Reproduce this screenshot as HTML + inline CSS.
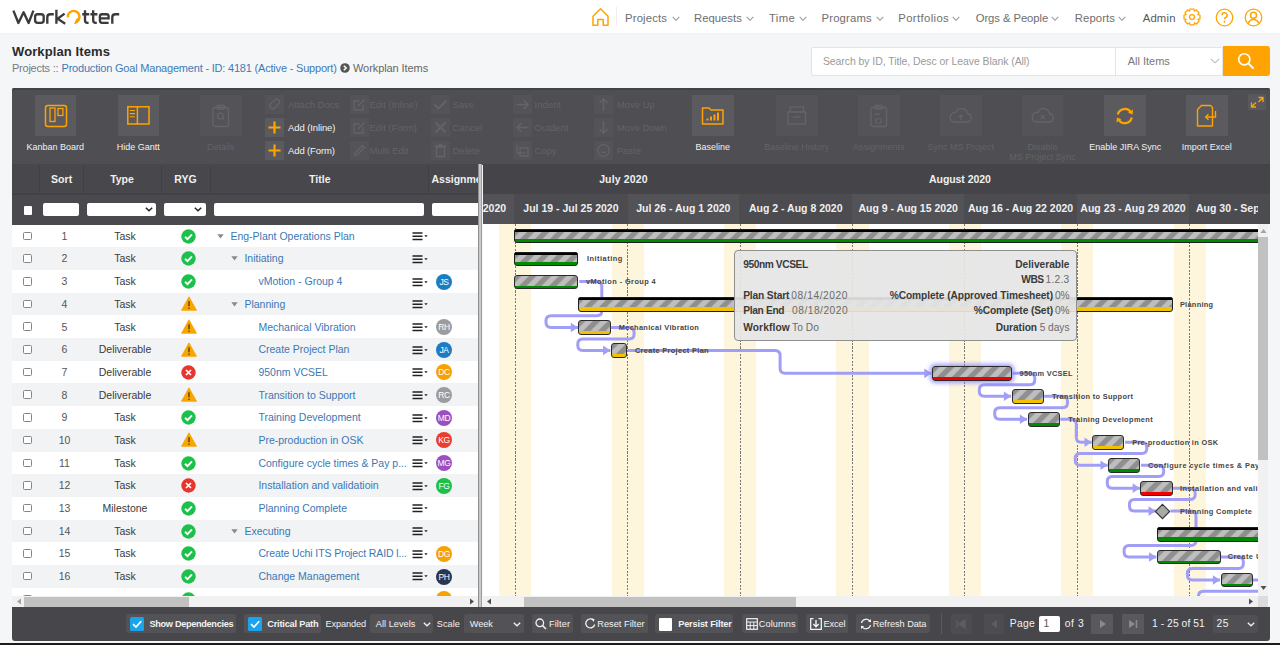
<!DOCTYPE html>
<html><head><meta charset="utf-8"><title>Workplan Items</title>
<style>
html,body{margin:0;padding:0;}
body{width:1280px;height:645px;overflow:hidden;position:relative;background:#f5f6f8;font-family:'Liberation Sans', sans-serif;}
.t{position:absolute;white-space:pre;}
svg{display:block;}
</style></head><body>
<div style="position:absolute;left:0.00px;top:0.00px;width:1280.00px;height:33.00px;background:#ffffff;"></div>
<div style="position:absolute;left:0.00px;top:33.00px;width:1280.00px;height:2.00px;background:linear-gradient(#f0f1f3,#f5f6f8);"></div>
<svg style="position:absolute;left:0.00px;top:0.00px;" width="130.00" height="33.00" viewBox="0 0 130.00 33.00"><g fill="none" stroke="#3b3b3d" stroke-width="2.35" stroke-linejoin="miter"><path d="M13.4 10.6 L18.4 23.0 L23.6 12.2 L28.6 23.0 L33.4 10.6" stroke-linejoin="round"/><rect x="35.1" y="14.2" width="8.6" height="8.6" rx="2.6"/><path d="M47.3 23.8 V17.2 Q47.3 14.2 50.3 14.2 H53.8"/><path d="M56.4 9.8 V23.8 M64.6 13.6 L57.6 18.8 L65.2 23.8"/><path d="M85 10.2 V20.6 Q85 22.8 87.4 22.8 H88.6 M82.2 14.2 H89.2"/><path d="M93.2 10.2 V20.6 Q93.2 22.8 95.6 22.8 H96.8 M90.4 14.2 H97.4"/><path d="M108.6 22.8 H102 Q99.9 22.8 99.9 20.6 V16.4 Q99.9 14.2 102.1 14.2 H106.4 Q108.6 14.2 108.6 16.4 V18.4 H100.6"/><path d="M112.3 23.8 V17.2 Q112.3 14.2 115.3 14.2 H119.2"/></g><path d="M67.9 17.4 A5.8 5.8 0 1 1 77.6 21.0" fill="none" stroke="#ffa300" stroke-width="2.4"/><path d="M79.3 18.6 Q79.2 22.8 74.6 23.6 Q75.8 21.2 76.6 19.0 Z" fill="#ffa300" stroke="#ffa300" stroke-width="1" stroke-linejoin="round"/></svg>
<div class="t" style="left:625.00px;top:13.43px;font:normal 11.3px/11.3px 'Liberation Sans', sans-serif;color:#6e6e6e;letter-spacing:0.165px;">Projects</div>
<svg style="position:absolute;left:672.00px;top:15.50px;" width="8.00" height="6.00" viewBox="0 0 8.00 6.00"><path d="M0.7 0.8 L4 4.3 L7.3 0.8" fill="none" stroke="#9a9a9a" stroke-width="1.1"/></svg>
<div class="t" style="left:694.00px;top:13.43px;font:normal 11.3px/11.3px 'Liberation Sans', sans-serif;color:#6e6e6e;letter-spacing:0.012px;">Requests</div>
<svg style="position:absolute;left:745.60px;top:15.50px;" width="8.00" height="6.00" viewBox="0 0 8.00 6.00"><path d="M0.7 0.8 L4 4.3 L7.3 0.8" fill="none" stroke="#9a9a9a" stroke-width="1.1"/></svg>
<div class="t" style="left:769.00px;top:13.43px;font:normal 11.3px/11.3px 'Liberation Sans', sans-serif;color:#6e6e6e;letter-spacing:0.361px;">Time</div>
<svg style="position:absolute;left:798.50px;top:15.50px;" width="8.00" height="6.00" viewBox="0 0 8.00 6.00"><path d="M0.7 0.8 L4 4.3 L7.3 0.8" fill="none" stroke="#9a9a9a" stroke-width="1.1"/></svg>
<div class="t" style="left:821.50px;top:13.43px;font:normal 11.3px/11.3px 'Liberation Sans', sans-serif;color:#6e6e6e;letter-spacing:0.170px;">Programs</div>
<svg style="position:absolute;left:875.50px;top:15.50px;" width="8.00" height="6.00" viewBox="0 0 8.00 6.00"><path d="M0.7 0.8 L4 4.3 L7.3 0.8" fill="none" stroke="#9a9a9a" stroke-width="1.1"/></svg>
<div class="t" style="left:898.30px;top:13.43px;font:normal 11.3px/11.3px 'Liberation Sans', sans-serif;color:#6e6e6e;letter-spacing:0.374px;">Portfolios</div>
<svg style="position:absolute;left:951.80px;top:15.50px;" width="8.00" height="6.00" viewBox="0 0 8.00 6.00"><path d="M0.7 0.8 L4 4.3 L7.3 0.8" fill="none" stroke="#9a9a9a" stroke-width="1.1"/></svg>
<div class="t" style="left:975.70px;top:13.43px;font:normal 11.3px/11.3px 'Liberation Sans', sans-serif;color:#6e6e6e;letter-spacing:-0.080px;">Orgs &amp; People</div>
<svg style="position:absolute;left:1051.30px;top:15.50px;" width="8.00" height="6.00" viewBox="0 0 8.00 6.00"><path d="M0.7 0.8 L4 4.3 L7.3 0.8" fill="none" stroke="#9a9a9a" stroke-width="1.1"/></svg>
<div class="t" style="left:1074.70px;top:13.43px;font:normal 11.3px/11.3px 'Liberation Sans', sans-serif;color:#6e6e6e;letter-spacing:0.124px;">Reports</div>
<svg style="position:absolute;left:1118.30px;top:15.50px;" width="8.00" height="6.00" viewBox="0 0 8.00 6.00"><path d="M0.7 0.8 L4 4.3 L7.3 0.8" fill="none" stroke="#9a9a9a" stroke-width="1.1"/></svg>
<div class="t" style="left:1142.70px;top:12.93px;font:normal 11.3px/11.3px 'Liberation Sans', sans-serif;color:#585858;letter-spacing:0.180px;">Admin</div>
<div style="position:absolute;left:616.00px;top:7.00px;width:1.00px;height:19.00px;background:#eeeeee;"></div>
<svg style="position:absolute;left:591.00px;top:7.00px;" width="19.00" height="20.00" viewBox="0 0 19.00 20.00"><path d="M2 9.2 L9.5 1.8 L17 9.2 V18.2 H12.2 V12.5 H6.8 V18.2 H2 Z" fill="none" stroke="#ffa300" stroke-width="1.5" stroke-linejoin="round"/></svg>
<svg style="position:absolute;left:1182.50px;top:8.00px;" width="18.00" height="18.00" viewBox="0 0 18.00 18.00"><path d="M16.96 7.05 L16.96 10.95 L14.84 11.61 L14.98 11.29 L16.01 13.25 L13.25 16.01 L11.29 14.98 L11.61 14.84 L10.95 16.96 L7.05 16.96 L6.39 14.84 L6.71 14.98 L4.75 16.01 L1.99 13.25 L3.02 11.29 L3.16 11.61 L1.04 10.95 L1.04 7.05 L3.16 6.39 L3.02 6.71 L1.99 4.75 L4.75 1.99 L6.71 3.02 L6.39 3.16 L7.05 1.04 L10.95 1.04 L11.61 3.16 L11.29 3.02 L13.25 1.99 L16.01 4.75 L14.98 6.71 L14.84 6.39Z" fill="none" stroke="#ffa300" stroke-width="1.25" stroke-linejoin="round"/><circle cx="9" cy="9" r="2.4" fill="none" stroke="#ffa300" stroke-width="1.25"/></svg>
<svg style="position:absolute;left:1215.00px;top:8.00px;" width="19.00" height="19.00" viewBox="0 0 19.00 19.00"><circle cx="9.5" cy="9.5" r="8.3" fill="none" stroke="#ffa300" stroke-width="1.25"/><path d="M6.9 7.3 A2.6 2.6 0 1 1 10.4 9.7 C9.7 10 9.5 10.5 9.5 11.3" fill="none" stroke="#ffa300" stroke-width="1.5"/><circle cx="9.5" cy="13.8" r="0.95" fill="#ffa300"/></svg>
<svg style="position:absolute;left:1244.00px;top:8.00px;" width="19.00" height="19.00" viewBox="0 0 19.00 19.00"><circle cx="9.5" cy="9.5" r="8.3" fill="none" stroke="#ffa300" stroke-width="1.25"/><circle cx="9.5" cy="7.3" r="3" fill="none" stroke="#ffa300" stroke-width="1.5"/><path d="M4.2 15.6 C5.2 12.6 7.2 11.6 9.5 11.6 C11.8 11.6 13.8 12.6 14.8 15.6" fill="none" stroke="#ffa300" stroke-width="1.5"/></svg>
<div class="t" style="left:12.00px;top:44.60px;font:bold 13px/13px 'Liberation Sans', sans-serif;color:#2a2a2a;letter-spacing:0.110px;">Workplan Items</div>
<div class="t" style="left:12.00px;top:62.69px;font:normal 11px/11px 'Liberation Sans', sans-serif;color:#7a7a7a;letter-spacing:-0.239px;">Projects :: </div>
<div class="t" style="left:61.50px;top:62.69px;font:normal 11px/11px 'Liberation Sans', sans-serif;color:#3e7bb6;letter-spacing:-0.197px;">Production Goal Management - ID: 4181 (Active - Support)</div>
<svg style="position:absolute;left:339.50px;top:63.00px;" width="10.00" height="10.00" viewBox="0 0 10.00 10.00"><circle cx="5" cy="5" r="4.8" fill="#555"/><path d="M3.8 2.7 L6.2 5 L3.8 7.3" fill="none" stroke="#fff" stroke-width="1.5"/></svg>
<div class="t" style="left:353.00px;top:62.69px;font:normal 11px/11px 'Liberation Sans', sans-serif;color:#666;letter-spacing:-0.080px;">Workplan Items</div>
<div style="position:absolute;left:810.50px;top:46.50px;width:412.00px;height:29.50px;background:#fff;border:1px solid #e3e4e7;box-sizing:border-box;border-radius:2px 0 0 2px;"></div>
<div style="position:absolute;left:1115.00px;top:47.00px;width:1.00px;height:28.50px;background:#e3e4e7;"></div>
<div class="t" style="left:822.90px;top:56.11px;font:normal 10.5px/10.5px 'Liberation Sans', sans-serif;color:#9a9a9a;letter-spacing:-0.075px;">Search by ID, Title, Desc or Leave Blank (All)</div>
<div class="t" style="left:1127.70px;top:55.69px;font:normal 11px/11px 'Liberation Sans', sans-serif;color:#777;letter-spacing:-0.010px;">All Items</div>
<svg style="position:absolute;left:1210.00px;top:58.00px;" width="10.00" height="6.00" viewBox="0 0 10.00 6.00"><path d="M0.8 0.8 L5 4.8 L9.2 0.8" fill="none" stroke="#bbb" stroke-width="1.1"/></svg>
<div style="position:absolute;left:1222.50px;top:46.20px;width:47.00px;height:29.80px;background:#ffa300;border-radius:0 3px 3px 0;"></div>
<svg style="position:absolute;left:1237.00px;top:52.00px;" width="18.00" height="18.00" viewBox="0 0 18.00 18.00"><circle cx="7.3" cy="7.3" r="5.6" fill="none" stroke="#fff" stroke-width="1.6"/><path d="M11.4 11.4 L16 16" stroke="#fff" stroke-width="1.8" stroke-linecap="round"/></svg>
<div style="position:absolute;left:11.50px;top:88.00px;width:1258.00px;height:77.00px;background:#4e4e53;border-radius:2px 2px 0 0;"></div>
<div style="position:absolute;left:11.50px;top:88.00px;width:1258.00px;height:1.50px;background:#434347;border-radius:2px 2px 0 0;"></div>
<div style="position:absolute;left:34.50px;top:95.00px;width:41.50px;height:41.00px;background:#5a5a5f;"></div>
<svg style="position:absolute;left:34.50px;top:95.00px;" width="41.50" height="41.00" viewBox="0 0 41.50 41.00"><rect x="10.5" y="10.5" width="21" height="21" rx="2.5" fill="none" stroke="#ffa300" stroke-width="1.5"/><rect x="15" y="13" width="5" height="13.5" fill="none" stroke="#ffa300" stroke-width="1.3"/><rect x="22.9" y="13.5" width="5" height="7" fill="none" stroke="#ffa300" stroke-width="1.3"/></svg>
<div class="t" style="left:26.48px;top:142.88px;font:normal 9px/9px 'Liberation Sans', sans-serif;color:#f2f2f2;">Kanban Board</div>
<div style="position:absolute;left:117.50px;top:95.00px;width:41.50px;height:41.00px;background:#5a5a5f;"></div>
<svg style="position:absolute;left:117.50px;top:95.00px;" width="41.50" height="41.00" viewBox="0 0 41.50 41.00"><rect x="9.8" y="11.8" width="21.2" height="17.2" fill="none" stroke="#ffa300" stroke-width="1.5"/><path d="M19.4 11.8 V29" stroke="#ffa300" stroke-width="1.5"/><path d="M11.8 15.5 H17 M11.8 18.6 H17 M11.8 21.7 H17" stroke="#ffa300" stroke-width="1.1"/></svg>
<div class="t" style="left:116.73px;top:142.88px;font:normal 9px/9px 'Liberation Sans', sans-serif;color:#f2f2f2;">Hide Gantt</div>
<div style="position:absolute;left:200.00px;top:95.00px;width:41.50px;height:41.00px;background:#535358;"></div>
<svg style="position:absolute;left:200.00px;top:95.00px;" width="41.50" height="41.00" viewBox="0 0 41.50 41.00"><rect x="13" y="12.5" width="15.5" height="19" rx="2" fill="none" stroke="#636368" stroke-width="1.4"/><rect x="17" y="10.5" width="7.5" height="3.5" rx="1" fill="none" stroke="#636368" stroke-width="1.3"/><circle cx="20.3" cy="21" r="2.8" fill="none" stroke="#636368" stroke-width="1.3"/><path d="M22.3 23 L24.5 25.2" stroke="#636368" stroke-width="1.3"/></svg>
<div class="t" style="left:206.99px;top:142.88px;font:normal 9px/9px 'Liberation Sans', sans-serif;color:#636368;">Details</div>
<div style="position:absolute;left:692.00px;top:95.00px;width:41.50px;height:41.00px;background:#5a5a5f;"></div>
<svg style="position:absolute;left:692.00px;top:95.00px;" width="41.50" height="41.00" viewBox="0 0 41.50 41.00"><path d="M10.5 13 H17 L19 15 H31 V29 H10.5 Z" fill="none" stroke="#ffa300" stroke-width="1.5" stroke-linejoin="round"/><path d="M15.5 25.5 V23.5 M19 25.5 V21.5 M22.5 25.5 V19.5 M26 25.5 V17.5" stroke="#ffa300" stroke-width="2"/></svg>
<div class="t" style="left:695.48px;top:142.88px;font:normal 9px/9px 'Liberation Sans', sans-serif;color:#f2f2f2;">Baseline</div>
<div style="position:absolute;left:776.00px;top:95.00px;width:41.50px;height:41.00px;background:#535358;"></div>
<svg style="position:absolute;left:776.00px;top:95.00px;" width="41.50" height="41.00" viewBox="0 0 41.50 41.00"><rect x="12" y="17" width="17.5" height="12" fill="none" stroke="#636368" stroke-width="1.4"/><rect x="14" y="12" width="13.5" height="5" fill="none" stroke="#636368" stroke-width="1.3"/><path d="M17 22 H24.5" stroke="#636368" stroke-width="1.3"/></svg>
<div class="t" style="left:764.23px;top:142.88px;font:normal 9px/9px 'Liberation Sans', sans-serif;color:#636368;">Baseline History</div>
<div style="position:absolute;left:858.00px;top:95.00px;width:41.50px;height:41.00px;background:#535358;"></div>
<svg style="position:absolute;left:858.00px;top:95.00px;" width="41.50" height="41.00" viewBox="0 0 41.50 41.00"><rect x="13" y="12.5" width="15.5" height="19" rx="2" fill="none" stroke="#636368" stroke-width="1.4"/><rect x="17" y="10.5" width="7.5" height="3.5" rx="1" fill="none" stroke="#636368" stroke-width="1.3"/><path d="M16.5 20 C18 18.5 20 18.5 21.5 20 M18 24 H23 V28 H18 Z" fill="none" stroke="#636368" stroke-width="1.2"/></svg>
<div class="t" style="left:852.98px;top:142.88px;font:normal 9px/9px 'Liberation Sans', sans-serif;color:#636368;">Assignments</div>
<div style="position:absolute;left:940.00px;top:95.00px;width:41.50px;height:41.00px;background:#535358;"></div>
<svg style="position:absolute;left:940.00px;top:95.00px;" width="41.50" height="41.00" viewBox="0 0 41.50 41.00"><path d="M14 27 H27.5 A4.3 4.3 0 0 0 27.5 18.5 A6 6 0 0 0 16 17.5 A4.8 4.8 0 0 0 14 27 Z" fill="none" stroke="#636368" stroke-width="1.4"/><path d="M20.8 25 V20 M18.7 22 L20.8 19.8 L22.9 22" fill="none" stroke="#636368" stroke-width="1.2"/></svg>
<div class="t" style="left:927.48px;top:142.88px;font:normal 9px/9px 'Liberation Sans', sans-serif;color:#636368;">Sync MS Project</div>
<div style="position:absolute;left:1021.70px;top:95.00px;width:41.50px;height:41.00px;background:#535358;"></div>
<svg style="position:absolute;left:1021.70px;top:95.00px;" width="41.50" height="41.00" viewBox="0 0 41.50 41.00"><path d="M14 27 H27.5 A4.3 4.3 0 0 0 27.5 18.5 A6 6 0 0 0 16 17.5 A4.8 4.8 0 0 0 14 27 Z" fill="none" stroke="#636368" stroke-width="1.4"/><path d="M18.8 20 L22.8 24 M22.8 20 L18.8 24" stroke="#636368" stroke-width="1.2"/></svg>
<div class="t" style="left:1027.44px;top:143.08px;font:normal 9px/9px 'Liberation Sans', sans-serif;color:#636368;">Disable</div>
<div class="t" style="left:1009.18px;top:153.28px;font:normal 9px/9px 'Liberation Sans', sans-serif;color:#636368;">MS Project Sync</div>
<div style="position:absolute;left:1104.40px;top:95.00px;width:41.50px;height:41.00px;background:#5a5a5f;"></div>
<svg style="position:absolute;left:1104.40px;top:95.00px;" width="41.50" height="41.00" viewBox="0 0 41.50 41.00"><path d="M13.8 19.5 A7.2 7.2 0 0 1 27 17.5" fill="none" stroke="#ffa300" stroke-width="2.2"/><path d="M27.8 22.5 A7.2 7.2 0 0 1 14.5 24.5" fill="none" stroke="#ffa300" stroke-width="2.2"/><path d="M24 17.8 L28.6 19.6 L29 14.6 Z" fill="#ffa300"/><path d="M17.5 24.2 L12.9 22.4 L12.5 27.4 Z" fill="#ffa300"/></svg>
<div class="t" style="left:1089.13px;top:142.88px;font:normal 9px/9px 'Liberation Sans', sans-serif;color:#f2f2f2;">Enable JIRA Sync</div>
<div style="position:absolute;left:1186.00px;top:95.00px;width:41.50px;height:41.00px;background:#5a5a5f;"></div>
<svg style="position:absolute;left:1186.00px;top:95.00px;" width="41.50" height="41.00" viewBox="0 0 41.50 41.00"><path d="M15.5 10.5 H24.5 L26.5 12.5 V31 H11.5 V14.5 Z" fill="none" stroke="#ffa300" stroke-width="1.4" stroke-linejoin="round"/><path d="M29.5 16 V22 H20" fill="none" stroke="#ffa300" stroke-width="1.4"/><path d="M22.5 19.2 L19.7 22 L22.5 24.8" fill="none" stroke="#ffa300" stroke-width="1.4"/></svg>
<div class="t" style="left:1181.74px;top:142.88px;font:normal 9px/9px 'Liberation Sans', sans-serif;color:#f2f2f2;">Import Excel</div>
<div style="position:absolute;left:1248.00px;top:94.00px;width:18.00px;height:16.00px;background:#58585d;"></div>
<svg style="position:absolute;left:1248.00px;top:94.00px;" width="18.00" height="16.00" viewBox="0 0 18.00 16.00"><path d="M10.5 3.5 H15 V8 M15 3.5 L10.5 8 M3.5 8.5 V13 H8 M3.5 13 L8 8.5" fill="none" stroke="#ffa300" stroke-width="1.3"/></svg>
<div style="position:absolute;left:264.75px;top:95.00px;width:19.00px;height:19.00px;background:#535358;"></div>
<svg style="position:absolute;left:264.75px;top:95.00px;" width="19.00" height="19.00" viewBox="0 0 19.00 19.00"><rect x="4.5" y="6.5" width="11" height="5.5" rx="2.7" transform="rotate(-45 9.5 9.5)" fill="none" stroke="#636368" stroke-width="1.4"/></svg>
<div class="t" style="left:288.00px;top:100.06px;font:normal 9.5px/9.5px 'Liberation Sans', sans-serif;color:#636368;">Attach Docs</div>
<div style="position:absolute;left:264.75px;top:117.80px;width:19.00px;height:19.00px;background:#5a5a5f;"></div>
<svg style="position:absolute;left:264.75px;top:117.80px;" width="19.00" height="19.00" viewBox="0 0 19.00 19.00"><path d="M9.5 3.5 V15.5 M3.5 9.5 H15.5" stroke="#ffa300" stroke-width="2.2"/></svg>
<div class="t" style="left:288.00px;top:122.86px;font:normal 9.5px/9.5px 'Liberation Sans', sans-serif;color:#f2f2f2;letter-spacing:-0.104px;">Add (Inline)</div>
<div style="position:absolute;left:264.75px;top:141.00px;width:19.00px;height:19.00px;background:#5a5a5f;"></div>
<svg style="position:absolute;left:264.75px;top:141.00px;" width="19.00" height="19.00" viewBox="0 0 19.00 19.00"><path d="M9.5 3.5 V15.5 M3.5 9.5 H15.5" stroke="#ffa300" stroke-width="2.2"/></svg>
<div class="t" style="left:288.00px;top:146.06px;font:normal 9.5px/9.5px 'Liberation Sans', sans-serif;color:#f2f2f2;letter-spacing:-0.120px;">Add (Form)</div>
<div style="position:absolute;left:349.80px;top:95.00px;width:19.00px;height:19.00px;background:#535358;"></div>
<svg style="position:absolute;left:349.80px;top:95.00px;" width="19.00" height="19.00" viewBox="0 0 19.00 19.00"><path d="M13 9.5 V15 H4 V6 H9.5" fill="none" stroke="#636368" stroke-width="1.3"/><path d="M8 11 L14.5 4.5" stroke="#636368" stroke-width="1.5"/></svg>
<div class="t" style="left:369.50px;top:100.06px;font:normal 9.5px/9.5px 'Liberation Sans', sans-serif;color:#636368;">Edit (Inline)</div>
<div style="position:absolute;left:349.80px;top:117.80px;width:19.00px;height:19.00px;background:#535358;"></div>
<svg style="position:absolute;left:349.80px;top:117.80px;" width="19.00" height="19.00" viewBox="0 0 19.00 19.00"><path d="M13 9.5 V15 H4 V6 H9.5" fill="none" stroke="#636368" stroke-width="1.3"/><path d="M8 11 L14.5 4.5" stroke="#636368" stroke-width="1.5"/></svg>
<div class="t" style="left:369.50px;top:122.86px;font:normal 9.5px/9.5px 'Liberation Sans', sans-serif;color:#636368;">Edit (Form)</div>
<div style="position:absolute;left:349.80px;top:141.00px;width:19.00px;height:19.00px;background:#535358;"></div>
<svg style="position:absolute;left:349.80px;top:141.00px;" width="19.00" height="19.00" viewBox="0 0 19.00 19.00"><path d="M4.5 14.5 L5 12 L12.5 4.5 L14.5 6.5 L7 14 Z" fill="none" stroke="#636368" stroke-width="1.3"/></svg>
<div class="t" style="left:369.50px;top:146.06px;font:normal 9.5px/9.5px 'Liberation Sans', sans-serif;color:#636368;">Multi Edit</div>
<div style="position:absolute;left:430.70px;top:95.00px;width:19.00px;height:19.00px;background:#535358;"></div>
<svg style="position:absolute;left:430.70px;top:95.00px;" width="19.00" height="19.00" viewBox="0 0 19.00 19.00"><path d="M3.5 9.5 L7.5 13.5 L15.5 5.5" fill="none" stroke="#636368" stroke-width="1.8"/></svg>
<div class="t" style="left:452.50px;top:100.06px;font:normal 9.5px/9.5px 'Liberation Sans', sans-serif;color:#636368;">Save</div>
<div style="position:absolute;left:430.70px;top:117.80px;width:19.00px;height:19.00px;background:#535358;"></div>
<svg style="position:absolute;left:430.70px;top:117.80px;" width="19.00" height="19.00" viewBox="0 0 19.00 19.00"><path d="M4.5 4.5 L14.5 14.5 M14.5 4.5 L4.5 14.5" stroke="#636368" stroke-width="1.8"/></svg>
<div class="t" style="left:452.50px;top:122.86px;font:normal 9.5px/9.5px 'Liberation Sans', sans-serif;color:#636368;">Cancel</div>
<div style="position:absolute;left:430.70px;top:141.00px;width:19.00px;height:19.00px;background:#535358;"></div>
<svg style="position:absolute;left:430.70px;top:141.00px;" width="19.00" height="19.00" viewBox="0 0 19.00 19.00"><path d="M5.5 6 H13.5 V15.5 H5.5 Z M4 5 H15 M8 3.5 H11" fill="none" stroke="#636368" stroke-width="1.3"/></svg>
<div class="t" style="left:452.50px;top:146.06px;font:normal 9.5px/9.5px 'Liberation Sans', sans-serif;color:#636368;">Delete</div>
<div style="position:absolute;left:513.40px;top:95.00px;width:19.00px;height:19.00px;background:#535358;"></div>
<svg style="position:absolute;left:513.40px;top:95.00px;" width="19.00" height="19.00" viewBox="0 0 19.00 19.00"><path d="M3.5 9.5 H15 M10.5 5 L15 9.5 L10.5 14" fill="none" stroke="#636368" stroke-width="1.5"/></svg>
<div class="t" style="left:534.50px;top:100.06px;font:normal 9.5px/9.5px 'Liberation Sans', sans-serif;color:#636368;">Indent</div>
<div style="position:absolute;left:513.40px;top:117.80px;width:19.00px;height:19.00px;background:#535358;"></div>
<svg style="position:absolute;left:513.40px;top:117.80px;" width="19.00" height="19.00" viewBox="0 0 19.00 19.00"><path d="M15.5 9.5 H4 M8.5 5 L4 9.5 L8.5 14" fill="none" stroke="#636368" stroke-width="1.5"/></svg>
<div class="t" style="left:534.50px;top:122.86px;font:normal 9.5px/9.5px 'Liberation Sans', sans-serif;color:#636368;">Outdent</div>
<div style="position:absolute;left:513.40px;top:141.00px;width:19.00px;height:19.00px;background:#535358;"></div>
<svg style="position:absolute;left:513.40px;top:141.00px;" width="19.00" height="19.00" viewBox="0 0 19.00 19.00"><path d="M4 4 V12 H12 M7 7 H15 V15 H7 Z" fill="none" stroke="#636368" stroke-width="1.3"/></svg>
<div class="t" style="left:534.50px;top:146.06px;font:normal 9.5px/9.5px 'Liberation Sans', sans-serif;color:#636368;">Copy</div>
<div style="position:absolute;left:594.20px;top:95.00px;width:19.00px;height:19.00px;background:#535358;"></div>
<svg style="position:absolute;left:594.20px;top:95.00px;" width="19.00" height="19.00" viewBox="0 0 19.00 19.00"><path d="M9.5 15.5 V4 M5.5 8 L9.5 4 L13.5 8" fill="none" stroke="#636368" stroke-width="1.5"/></svg>
<div class="t" style="left:616.70px;top:100.06px;font:normal 9.5px/9.5px 'Liberation Sans', sans-serif;color:#636368;">Move Up</div>
<div style="position:absolute;left:594.20px;top:117.80px;width:19.00px;height:19.00px;background:#535358;"></div>
<svg style="position:absolute;left:594.20px;top:117.80px;" width="19.00" height="19.00" viewBox="0 0 19.00 19.00"><path d="M9.5 3.5 V15 M5.5 11 L9.5 15 L13.5 11" fill="none" stroke="#636368" stroke-width="1.5"/></svg>
<div class="t" style="left:616.70px;top:122.86px;font:normal 9.5px/9.5px 'Liberation Sans', sans-serif;color:#636368;">Move Down</div>
<div style="position:absolute;left:594.20px;top:141.00px;width:19.00px;height:19.00px;background:#535358;"></div>
<svg style="position:absolute;left:594.20px;top:141.00px;" width="19.00" height="19.00" viewBox="0 0 19.00 19.00"><circle cx="9.5" cy="9.5" r="5.8" fill="none" stroke="#636368" stroke-width="1.3"/><path d="M7 10.5 C8.5 12 10.5 12 12 10.5" fill="none" stroke="#636368" stroke-width="1.1"/></svg>
<div class="t" style="left:616.70px;top:146.06px;font:normal 9.5px/9.5px 'Liberation Sans', sans-serif;color:#636368;">Paste</div>
<div style="position:absolute;left:11.50px;top:164.00px;width:466.30px;height:30.00px;background:#47474c;"></div>
<div style="position:absolute;left:11.50px;top:194.00px;width:466.30px;height:30.65px;background:#49494e;"></div>
<div style="position:absolute;left:11.50px;top:193.00px;width:466.30px;height:1.50px;background:#424246;"></div>
<div style="position:absolute;left:39.00px;top:166.00px;width:1.00px;height:27.00px;background:#404044;"></div>
<div style="position:absolute;left:83.00px;top:166.00px;width:1.00px;height:27.00px;background:#404044;"></div>
<div style="position:absolute;left:161.00px;top:166.00px;width:1.00px;height:27.00px;background:#404044;"></div>
<div style="position:absolute;left:209.70px;top:166.00px;width:1.00px;height:27.00px;background:#404044;"></div>
<div style="position:absolute;left:427.50px;top:166.00px;width:1.00px;height:27.00px;background:#404044;"></div>
<div class="t" style="left:51.03px;top:173.61px;font:bold 10.5px/10.5px 'Liberation Sans', sans-serif;color:#f0f0f0;letter-spacing:0.088px;">Sort</div>
<div class="t" style="left:110.13px;top:173.61px;font:bold 10.5px/10.5px 'Liberation Sans', sans-serif;color:#f0f0f0;">Type</div>
<div class="t" style="left:174.31px;top:173.61px;font:bold 10.5px/10.5px 'Liberation Sans', sans-serif;color:#f0f0f0;">RYG</div>
<div class="t" style="left:308.88px;top:173.61px;font:bold 10.5px/10.5px 'Liberation Sans', sans-serif;color:#f0f0f0;letter-spacing:0.089px;">Title</div>
<div style="position:absolute;left:11.5px;top:164px;width:466.30px;height:30px;overflow:hidden;">
<div class="t" style="left:420.00px;top:9.61px;font:bold 10.5px/10.5px 'Liberation Sans', sans-serif;color:#f0f0f0;">Assignments</div>
</div>
<div style="position:absolute;left:23.50px;top:206.00px;width:8.50px;height:8.50px;background:#fff;border-radius:1px;"></div>
<div style="position:absolute;left:43.40px;top:202.75px;width:35.60px;height:13.50px;background:#fff;border-radius:2px;"></div>
<div style="position:absolute;left:86.90px;top:202.75px;width:69.00px;height:13.50px;background:#fff;border-radius:2px;"></div>
<div style="position:absolute;left:163.75px;top:202.75px;width:41.85px;height:13.50px;background:#fff;border-radius:2px;"></div>
<div style="position:absolute;left:213.60px;top:202.75px;width:210.00px;height:13.50px;background:#fff;border-radius:2px;"></div>
<div style="position:absolute;left:431.90px;top:202.75px;width:46.00px;height:13.50px;background:#fff;border-radius:2px 0 0 2px;"></div>
<svg style="position:absolute;left:144.50px;top:207.30px;" width="8.00" height="5.00" viewBox="0 0 8.00 5.00"><path d="M0.8 0.8 L4 3.8 L7.2 0.8" fill="none" stroke="#222" stroke-width="1.5"/></svg>
<svg style="position:absolute;left:194.00px;top:207.30px;" width="8.00" height="5.00" viewBox="0 0 8.00 5.00"><path d="M0.8 0.8 L4 3.8 L7.2 0.8" fill="none" stroke="#222" stroke-width="1.5"/></svg>
<div style="position:absolute;left:11.5px;top:224.65px;width:466.30px;height:371.35px;overflow:hidden;background:#fff;">
<div style="position:absolute;left:11.70px;top:7.00px;width:8.50px;height:8.50px;background:#fff;border:1px solid #858585;box-sizing:border-box;border-radius:1.5px;"></div>
<div class="t" style="left:50.08px;top:6.16px;font:normal 10.5px/10.5px 'Liberation Sans', sans-serif;color:#555;">1</div>
<div class="t" style="left:102.70px;top:6.16px;font:normal 10.5px/10.5px 'Liberation Sans', sans-serif;color:#3a3a3a;">Task</div>
<svg style="position:absolute;left:169.50px;top:4.10px;" width="15.00" height="15.00" viewBox="0 0 15.00 15.00"><circle cx="7.5" cy="7.5" r="7.2" fill="#1cc04a"/><path d="M4 7.8 L6.5 10.2 L11 5.3" fill="none" stroke="#fff" stroke-width="1.9"/></svg>
<svg style="position:absolute;left:205.00px;top:9.00px;" width="7.00" height="5.00" viewBox="0 0 7.00 5.00"><path d="M0.3 0.3 H6.7 L3.5 4.6 Z" fill="#8a8a8a"/></svg>
<div class="t" style="left:218.90px;top:6.16px;font:normal 10.5px/10.5px 'Liberation Sans', sans-serif;color:#3a78b4;">Eng-Plant Operations Plan</div>
<svg style="position:absolute;left:400.00px;top:7.50px;" width="17.00" height="9.00" viewBox="0 0 17.00 9.00"><path d="M0.5 1 H10.5 M0.5 4.2 H10.5 M0.5 7.4 H10.5" stroke="#222" stroke-width="1.5"/><path d="M12.3 3.3 H15.7 L14 5.2 Z" fill="#222"/></svg>
<div style="position:absolute;left:0.00px;top:22.69px;width:466.30px;height:22.69px;background:#f2f3f5;"></div>
<div style="position:absolute;left:11.70px;top:29.69px;width:8.50px;height:8.50px;background:#fff;border:1px solid #858585;box-sizing:border-box;border-radius:1.5px;"></div>
<div class="t" style="left:50.08px;top:28.85px;font:normal 10.5px/10.5px 'Liberation Sans', sans-serif;color:#555;">2</div>
<div class="t" style="left:102.70px;top:28.85px;font:normal 10.5px/10.5px 'Liberation Sans', sans-serif;color:#3a3a3a;">Task</div>
<svg style="position:absolute;left:169.50px;top:26.79px;" width="15.00" height="15.00" viewBox="0 0 15.00 15.00"><circle cx="7.5" cy="7.5" r="7.2" fill="#1cc04a"/><path d="M4 7.8 L6.5 10.2 L11 5.3" fill="none" stroke="#fff" stroke-width="1.9"/></svg>
<svg style="position:absolute;left:219.00px;top:31.69px;" width="7.00" height="5.00" viewBox="0 0 7.00 5.00"><path d="M0.3 0.3 H6.7 L3.5 4.6 Z" fill="#8a8a8a"/></svg>
<div class="t" style="left:232.90px;top:28.85px;font:normal 10.5px/10.5px 'Liberation Sans', sans-serif;color:#3a78b4;">Initiating</div>
<svg style="position:absolute;left:400.00px;top:30.19px;" width="17.00" height="9.00" viewBox="0 0 17.00 9.00"><path d="M0.5 1 H10.5 M0.5 4.2 H10.5 M0.5 7.4 H10.5" stroke="#222" stroke-width="1.5"/><path d="M12.3 3.3 H15.7 L14 5.2 Z" fill="#222"/></svg>
<div style="position:absolute;left:11.70px;top:52.38px;width:8.50px;height:8.50px;background:#fff;border:1px solid #858585;box-sizing:border-box;border-radius:1.5px;"></div>
<div class="t" style="left:50.08px;top:51.54px;font:normal 10.5px/10.5px 'Liberation Sans', sans-serif;color:#555;">3</div>
<div class="t" style="left:102.70px;top:51.54px;font:normal 10.5px/10.5px 'Liberation Sans', sans-serif;color:#3a3a3a;">Task</div>
<svg style="position:absolute;left:169.50px;top:49.48px;" width="15.00" height="15.00" viewBox="0 0 15.00 15.00"><circle cx="7.5" cy="7.5" r="7.2" fill="#1cc04a"/><path d="M4 7.8 L6.5 10.2 L11 5.3" fill="none" stroke="#fff" stroke-width="1.9"/></svg>
<div class="t" style="left:246.90px;top:51.54px;font:normal 10.5px/10.5px 'Liberation Sans', sans-serif;color:#3a78b4;">vMotion - Group 4</div>
<svg style="position:absolute;left:400.00px;top:52.88px;" width="17.00" height="9.00" viewBox="0 0 17.00 9.00"><path d="M0.5 1 H10.5 M0.5 4.2 H10.5 M0.5 7.4 H10.5" stroke="#222" stroke-width="1.5"/><path d="M12.3 3.3 H15.7 L14 5.2 Z" fill="#222"/></svg>
<svg style="position:absolute;left:424.30px;top:48.98px;" width="16.00" height="16.00" viewBox="0 0 16.00 16.00"><circle cx="8" cy="8" r="8" fill="#1a7dc4"/><text x="8" y="11" text-anchor="middle" font-family="Liberation Sans" font-size="8.5" fill="#fff" letter-spacing="-0.4">JS</text></svg>
<div style="position:absolute;left:0.00px;top:68.07px;width:466.30px;height:22.69px;background:#f2f3f5;"></div>
<div style="position:absolute;left:11.70px;top:75.07px;width:8.50px;height:8.50px;background:#fff;border:1px solid #858585;box-sizing:border-box;border-radius:1.5px;"></div>
<div class="t" style="left:50.08px;top:74.23px;font:normal 10.5px/10.5px 'Liberation Sans', sans-serif;color:#555;">4</div>
<div class="t" style="left:102.70px;top:74.23px;font:normal 10.5px/10.5px 'Liberation Sans', sans-serif;color:#3a3a3a;">Task</div>
<svg style="position:absolute;left:169.00px;top:71.67px;" width="16.00" height="15.00" viewBox="0 0 16.00 15.00"><path d="M8 0.8 L15.5 14.3 H0.5 Z" fill="#f8a500" stroke="#f8a500" stroke-width="0.8" stroke-linejoin="round"/><path d="M8 5.2 V10.2" stroke="#4a3500" stroke-width="1.3"/><circle cx="8" cy="12.2" r="0.8" fill="#4a3500"/></svg>
<svg style="position:absolute;left:219.00px;top:77.07px;" width="7.00" height="5.00" viewBox="0 0 7.00 5.00"><path d="M0.3 0.3 H6.7 L3.5 4.6 Z" fill="#8a8a8a"/></svg>
<div class="t" style="left:232.90px;top:74.23px;font:normal 10.5px/10.5px 'Liberation Sans', sans-serif;color:#3a78b4;">Planning</div>
<svg style="position:absolute;left:400.00px;top:75.57px;" width="17.00" height="9.00" viewBox="0 0 17.00 9.00"><path d="M0.5 1 H10.5 M0.5 4.2 H10.5 M0.5 7.4 H10.5" stroke="#222" stroke-width="1.5"/><path d="M12.3 3.3 H15.7 L14 5.2 Z" fill="#222"/></svg>
<div style="position:absolute;left:11.70px;top:97.76px;width:8.50px;height:8.50px;background:#fff;border:1px solid #858585;box-sizing:border-box;border-radius:1.5px;"></div>
<div class="t" style="left:50.08px;top:96.92px;font:normal 10.5px/10.5px 'Liberation Sans', sans-serif;color:#555;">5</div>
<div class="t" style="left:102.70px;top:96.92px;font:normal 10.5px/10.5px 'Liberation Sans', sans-serif;color:#3a3a3a;">Task</div>
<svg style="position:absolute;left:169.00px;top:94.36px;" width="16.00" height="15.00" viewBox="0 0 16.00 15.00"><path d="M8 0.8 L15.5 14.3 H0.5 Z" fill="#f8a500" stroke="#f8a500" stroke-width="0.8" stroke-linejoin="round"/><path d="M8 5.2 V10.2" stroke="#4a3500" stroke-width="1.3"/><circle cx="8" cy="12.2" r="0.8" fill="#4a3500"/></svg>
<div class="t" style="left:246.90px;top:96.92px;font:normal 10.5px/10.5px 'Liberation Sans', sans-serif;color:#3a78b4;">Mechanical Vibration</div>
<svg style="position:absolute;left:400.00px;top:98.26px;" width="17.00" height="9.00" viewBox="0 0 17.00 9.00"><path d="M0.5 1 H10.5 M0.5 4.2 H10.5 M0.5 7.4 H10.5" stroke="#222" stroke-width="1.5"/><path d="M12.3 3.3 H15.7 L14 5.2 Z" fill="#222"/></svg>
<svg style="position:absolute;left:424.30px;top:94.36px;" width="16.00" height="16.00" viewBox="0 0 16.00 16.00"><circle cx="8" cy="8" r="8" fill="#9c9c9c"/><text x="8" y="11" text-anchor="middle" font-family="Liberation Sans" font-size="8.5" fill="#fff" letter-spacing="-0.4">RH</text></svg>
<div style="position:absolute;left:0.00px;top:113.45px;width:466.30px;height:22.69px;background:#f2f3f5;"></div>
<div style="position:absolute;left:11.70px;top:120.45px;width:8.50px;height:8.50px;background:#fff;border:1px solid #858585;box-sizing:border-box;border-radius:1.5px;"></div>
<div class="t" style="left:50.08px;top:119.61px;font:normal 10.5px/10.5px 'Liberation Sans', sans-serif;color:#555;">6</div>
<div class="t" style="left:87.23px;top:119.61px;font:normal 10.5px/10.5px 'Liberation Sans', sans-serif;color:#3a3a3a;">Deliverable</div>
<svg style="position:absolute;left:169.00px;top:117.05px;" width="16.00" height="15.00" viewBox="0 0 16.00 15.00"><path d="M8 0.8 L15.5 14.3 H0.5 Z" fill="#f8a500" stroke="#f8a500" stroke-width="0.8" stroke-linejoin="round"/><path d="M8 5.2 V10.2" stroke="#4a3500" stroke-width="1.3"/><circle cx="8" cy="12.2" r="0.8" fill="#4a3500"/></svg>
<div class="t" style="left:246.90px;top:119.61px;font:normal 10.5px/10.5px 'Liberation Sans', sans-serif;color:#3a78b4;">Create Project Plan</div>
<svg style="position:absolute;left:400.00px;top:120.95px;" width="17.00" height="9.00" viewBox="0 0 17.00 9.00"><path d="M0.5 1 H10.5 M0.5 4.2 H10.5 M0.5 7.4 H10.5" stroke="#222" stroke-width="1.5"/><path d="M12.3 3.3 H15.7 L14 5.2 Z" fill="#222"/></svg>
<svg style="position:absolute;left:424.30px;top:117.05px;" width="16.00" height="16.00" viewBox="0 0 16.00 16.00"><circle cx="8" cy="8" r="8" fill="#1a7dc4"/><text x="8" y="11" text-anchor="middle" font-family="Liberation Sans" font-size="8.5" fill="#fff" letter-spacing="-0.4">JA</text></svg>
<div style="position:absolute;left:11.70px;top:143.14px;width:8.50px;height:8.50px;background:#fff;border:1px solid #858585;box-sizing:border-box;border-radius:1.5px;"></div>
<div class="t" style="left:50.08px;top:142.30px;font:normal 10.5px/10.5px 'Liberation Sans', sans-serif;color:#555;">7</div>
<div class="t" style="left:87.23px;top:142.30px;font:normal 10.5px/10.5px 'Liberation Sans', sans-serif;color:#3a3a3a;">Deliverable</div>
<svg style="position:absolute;left:169.50px;top:140.24px;" width="15.00" height="15.00" viewBox="0 0 15.00 15.00"><circle cx="7.5" cy="7.5" r="7.2" fill="#e8362c"/><path d="M5 5 L10 10 M10 5 L5 10" stroke="#fff" stroke-width="1.7"/></svg>
<div class="t" style="left:246.90px;top:142.30px;font:normal 10.5px/10.5px 'Liberation Sans', sans-serif;color:#3a78b4;">950nm VCSEL</div>
<svg style="position:absolute;left:400.00px;top:143.64px;" width="17.00" height="9.00" viewBox="0 0 17.00 9.00"><path d="M0.5 1 H10.5 M0.5 4.2 H10.5 M0.5 7.4 H10.5" stroke="#222" stroke-width="1.5"/><path d="M12.3 3.3 H15.7 L14 5.2 Z" fill="#222"/></svg>
<svg style="position:absolute;left:424.30px;top:139.74px;" width="16.00" height="16.00" viewBox="0 0 16.00 16.00"><circle cx="8" cy="8" r="8" fill="#f6a200"/><text x="8" y="11" text-anchor="middle" font-family="Liberation Sans" font-size="8.5" fill="#fff" letter-spacing="-0.4">DC</text></svg>
<div style="position:absolute;left:0.00px;top:158.83px;width:466.30px;height:22.69px;background:#f2f3f5;"></div>
<div style="position:absolute;left:11.70px;top:165.83px;width:8.50px;height:8.50px;background:#fff;border:1px solid #858585;box-sizing:border-box;border-radius:1.5px;"></div>
<div class="t" style="left:50.08px;top:164.99px;font:normal 10.5px/10.5px 'Liberation Sans', sans-serif;color:#555;">8</div>
<div class="t" style="left:87.23px;top:164.99px;font:normal 10.5px/10.5px 'Liberation Sans', sans-serif;color:#3a3a3a;">Deliverable</div>
<svg style="position:absolute;left:169.00px;top:162.43px;" width="16.00" height="15.00" viewBox="0 0 16.00 15.00"><path d="M8 0.8 L15.5 14.3 H0.5 Z" fill="#f8a500" stroke="#f8a500" stroke-width="0.8" stroke-linejoin="round"/><path d="M8 5.2 V10.2" stroke="#4a3500" stroke-width="1.3"/><circle cx="8" cy="12.2" r="0.8" fill="#4a3500"/></svg>
<div class="t" style="left:246.90px;top:164.99px;font:normal 10.5px/10.5px 'Liberation Sans', sans-serif;color:#3a78b4;">Transition to Support</div>
<svg style="position:absolute;left:400.00px;top:166.33px;" width="17.00" height="9.00" viewBox="0 0 17.00 9.00"><path d="M0.5 1 H10.5 M0.5 4.2 H10.5 M0.5 7.4 H10.5" stroke="#222" stroke-width="1.5"/><path d="M12.3 3.3 H15.7 L14 5.2 Z" fill="#222"/></svg>
<svg style="position:absolute;left:424.30px;top:162.43px;" width="16.00" height="16.00" viewBox="0 0 16.00 16.00"><circle cx="8" cy="8" r="8" fill="#9c9c9c"/><text x="8" y="11" text-anchor="middle" font-family="Liberation Sans" font-size="8.5" fill="#fff" letter-spacing="-0.4">RC</text></svg>
<div style="position:absolute;left:11.70px;top:188.52px;width:8.50px;height:8.50px;background:#fff;border:1px solid #858585;box-sizing:border-box;border-radius:1.5px;"></div>
<div class="t" style="left:50.08px;top:187.68px;font:normal 10.5px/10.5px 'Liberation Sans', sans-serif;color:#555;">9</div>
<div class="t" style="left:102.70px;top:187.68px;font:normal 10.5px/10.5px 'Liberation Sans', sans-serif;color:#3a3a3a;">Task</div>
<svg style="position:absolute;left:169.50px;top:185.62px;" width="15.00" height="15.00" viewBox="0 0 15.00 15.00"><circle cx="7.5" cy="7.5" r="7.2" fill="#1cc04a"/><path d="M4 7.8 L6.5 10.2 L11 5.3" fill="none" stroke="#fff" stroke-width="1.9"/></svg>
<div class="t" style="left:246.90px;top:187.68px;font:normal 10.5px/10.5px 'Liberation Sans', sans-serif;color:#3a78b4;">Training Development</div>
<svg style="position:absolute;left:400.00px;top:189.02px;" width="17.00" height="9.00" viewBox="0 0 17.00 9.00"><path d="M0.5 1 H10.5 M0.5 4.2 H10.5 M0.5 7.4 H10.5" stroke="#222" stroke-width="1.5"/><path d="M12.3 3.3 H15.7 L14 5.2 Z" fill="#222"/></svg>
<svg style="position:absolute;left:424.30px;top:185.12px;" width="16.00" height="16.00" viewBox="0 0 16.00 16.00"><circle cx="8" cy="8" r="8" fill="#9b4fc0"/><text x="8" y="11" text-anchor="middle" font-family="Liberation Sans" font-size="8.5" fill="#fff" letter-spacing="-0.4">MD</text></svg>
<div style="position:absolute;left:0.00px;top:204.21px;width:466.30px;height:22.69px;background:#f2f3f5;"></div>
<div style="position:absolute;left:11.70px;top:211.21px;width:8.50px;height:8.50px;background:#fff;border:1px solid #858585;box-sizing:border-box;border-radius:1.5px;"></div>
<div class="t" style="left:47.16px;top:210.37px;font:normal 10.5px/10.5px 'Liberation Sans', sans-serif;color:#555;">10</div>
<div class="t" style="left:102.70px;top:210.37px;font:normal 10.5px/10.5px 'Liberation Sans', sans-serif;color:#3a3a3a;">Task</div>
<svg style="position:absolute;left:169.00px;top:207.81px;" width="16.00" height="15.00" viewBox="0 0 16.00 15.00"><path d="M8 0.8 L15.5 14.3 H0.5 Z" fill="#f8a500" stroke="#f8a500" stroke-width="0.8" stroke-linejoin="round"/><path d="M8 5.2 V10.2" stroke="#4a3500" stroke-width="1.3"/><circle cx="8" cy="12.2" r="0.8" fill="#4a3500"/></svg>
<div class="t" style="left:246.90px;top:210.37px;font:normal 10.5px/10.5px 'Liberation Sans', sans-serif;color:#3a78b4;">Pre-production in OSK</div>
<svg style="position:absolute;left:400.00px;top:211.71px;" width="17.00" height="9.00" viewBox="0 0 17.00 9.00"><path d="M0.5 1 H10.5 M0.5 4.2 H10.5 M0.5 7.4 H10.5" stroke="#222" stroke-width="1.5"/><path d="M12.3 3.3 H15.7 L14 5.2 Z" fill="#222"/></svg>
<svg style="position:absolute;left:424.30px;top:207.81px;" width="16.00" height="16.00" viewBox="0 0 16.00 16.00"><circle cx="8" cy="8" r="8" fill="#e8402c"/><text x="8" y="11" text-anchor="middle" font-family="Liberation Sans" font-size="8.5" fill="#fff" letter-spacing="-0.4">KG</text></svg>
<div style="position:absolute;left:11.70px;top:233.90px;width:8.50px;height:8.50px;background:#fff;border:1px solid #858585;box-sizing:border-box;border-radius:1.5px;"></div>
<div class="t" style="left:47.55px;top:233.06px;font:normal 10.5px/10.5px 'Liberation Sans', sans-serif;color:#555;">11</div>
<div class="t" style="left:102.70px;top:233.06px;font:normal 10.5px/10.5px 'Liberation Sans', sans-serif;color:#3a3a3a;">Task</div>
<svg style="position:absolute;left:169.50px;top:231.00px;" width="15.00" height="15.00" viewBox="0 0 15.00 15.00"><circle cx="7.5" cy="7.5" r="7.2" fill="#1cc04a"/><path d="M4 7.8 L6.5 10.2 L11 5.3" fill="none" stroke="#fff" stroke-width="1.9"/></svg>
<div class="t" style="left:246.90px;top:233.06px;font:normal 10.5px/10.5px 'Liberation Sans', sans-serif;color:#3a78b4;letter-spacing:-0.011px;">Configure cycle times &amp; Pay p...</div>
<svg style="position:absolute;left:400.00px;top:234.40px;" width="17.00" height="9.00" viewBox="0 0 17.00 9.00"><path d="M0.5 1 H10.5 M0.5 4.2 H10.5 M0.5 7.4 H10.5" stroke="#222" stroke-width="1.5"/><path d="M12.3 3.3 H15.7 L14 5.2 Z" fill="#222"/></svg>
<svg style="position:absolute;left:424.30px;top:230.50px;" width="16.00" height="16.00" viewBox="0 0 16.00 16.00"><circle cx="8" cy="8" r="8" fill="#9b4fc0"/><text x="8" y="11" text-anchor="middle" font-family="Liberation Sans" font-size="8.5" fill="#fff" letter-spacing="-0.4">MG</text></svg>
<div style="position:absolute;left:0.00px;top:249.59px;width:466.30px;height:22.69px;background:#f2f3f5;"></div>
<div style="position:absolute;left:11.70px;top:256.59px;width:8.50px;height:8.50px;background:#fff;border:1px solid #858585;box-sizing:border-box;border-radius:1.5px;"></div>
<div class="t" style="left:47.16px;top:255.75px;font:normal 10.5px/10.5px 'Liberation Sans', sans-serif;color:#555;">12</div>
<div class="t" style="left:102.70px;top:255.75px;font:normal 10.5px/10.5px 'Liberation Sans', sans-serif;color:#3a3a3a;">Task</div>
<svg style="position:absolute;left:169.50px;top:253.69px;" width="15.00" height="15.00" viewBox="0 0 15.00 15.00"><circle cx="7.5" cy="7.5" r="7.2" fill="#e8362c"/><path d="M5 5 L10 10 M10 5 L5 10" stroke="#fff" stroke-width="1.7"/></svg>
<div class="t" style="left:246.90px;top:255.75px;font:normal 10.5px/10.5px 'Liberation Sans', sans-serif;color:#3a78b4;">Installation and validatioin</div>
<svg style="position:absolute;left:400.00px;top:257.09px;" width="17.00" height="9.00" viewBox="0 0 17.00 9.00"><path d="M0.5 1 H10.5 M0.5 4.2 H10.5 M0.5 7.4 H10.5" stroke="#222" stroke-width="1.5"/><path d="M12.3 3.3 H15.7 L14 5.2 Z" fill="#222"/></svg>
<svg style="position:absolute;left:424.30px;top:253.19px;" width="16.00" height="16.00" viewBox="0 0 16.00 16.00"><circle cx="8" cy="8" r="8" fill="#1cc04a"/><text x="8" y="11" text-anchor="middle" font-family="Liberation Sans" font-size="8.5" fill="#fff" letter-spacing="-0.4">FG</text></svg>
<div style="position:absolute;left:11.70px;top:279.28px;width:8.50px;height:8.50px;background:#fff;border:1px solid #858585;box-sizing:border-box;border-radius:1.5px;"></div>
<div class="t" style="left:47.16px;top:278.44px;font:normal 10.5px/10.5px 'Liberation Sans', sans-serif;color:#555;">13</div>
<div class="t" style="left:91.02px;top:278.44px;font:normal 10.5px/10.5px 'Liberation Sans', sans-serif;color:#3a3a3a;">Milestone</div>
<svg style="position:absolute;left:169.50px;top:276.38px;" width="15.00" height="15.00" viewBox="0 0 15.00 15.00"><circle cx="7.5" cy="7.5" r="7.2" fill="#1cc04a"/><path d="M4 7.8 L6.5 10.2 L11 5.3" fill="none" stroke="#fff" stroke-width="1.9"/></svg>
<div class="t" style="left:246.90px;top:278.44px;font:normal 10.5px/10.5px 'Liberation Sans', sans-serif;color:#3a78b4;">Planning Complete</div>
<svg style="position:absolute;left:400.00px;top:279.78px;" width="17.00" height="9.00" viewBox="0 0 17.00 9.00"><path d="M0.5 1 H10.5 M0.5 4.2 H10.5 M0.5 7.4 H10.5" stroke="#222" stroke-width="1.5"/><path d="M12.3 3.3 H15.7 L14 5.2 Z" fill="#222"/></svg>
<div style="position:absolute;left:0.00px;top:294.97px;width:466.30px;height:22.69px;background:#f2f3f5;"></div>
<div style="position:absolute;left:11.70px;top:301.97px;width:8.50px;height:8.50px;background:#fff;border:1px solid #858585;box-sizing:border-box;border-radius:1.5px;"></div>
<div class="t" style="left:47.16px;top:301.13px;font:normal 10.5px/10.5px 'Liberation Sans', sans-serif;color:#555;">14</div>
<div class="t" style="left:102.70px;top:301.13px;font:normal 10.5px/10.5px 'Liberation Sans', sans-serif;color:#3a3a3a;">Task</div>
<svg style="position:absolute;left:169.50px;top:299.07px;" width="15.00" height="15.00" viewBox="0 0 15.00 15.00"><circle cx="7.5" cy="7.5" r="7.2" fill="#1cc04a"/><path d="M4 7.8 L6.5 10.2 L11 5.3" fill="none" stroke="#fff" stroke-width="1.9"/></svg>
<svg style="position:absolute;left:219.00px;top:303.97px;" width="7.00" height="5.00" viewBox="0 0 7.00 5.00"><path d="M0.3 0.3 H6.7 L3.5 4.6 Z" fill="#8a8a8a"/></svg>
<div class="t" style="left:232.90px;top:301.13px;font:normal 10.5px/10.5px 'Liberation Sans', sans-serif;color:#3a78b4;">Executing</div>
<svg style="position:absolute;left:400.00px;top:302.47px;" width="17.00" height="9.00" viewBox="0 0 17.00 9.00"><path d="M0.5 1 H10.5 M0.5 4.2 H10.5 M0.5 7.4 H10.5" stroke="#222" stroke-width="1.5"/><path d="M12.3 3.3 H15.7 L14 5.2 Z" fill="#222"/></svg>
<div style="position:absolute;left:11.70px;top:324.66px;width:8.50px;height:8.50px;background:#fff;border:1px solid #858585;box-sizing:border-box;border-radius:1.5px;"></div>
<div class="t" style="left:47.16px;top:323.82px;font:normal 10.5px/10.5px 'Liberation Sans', sans-serif;color:#555;">15</div>
<div class="t" style="left:102.70px;top:323.82px;font:normal 10.5px/10.5px 'Liberation Sans', sans-serif;color:#3a3a3a;">Task</div>
<svg style="position:absolute;left:169.50px;top:321.76px;" width="15.00" height="15.00" viewBox="0 0 15.00 15.00"><circle cx="7.5" cy="7.5" r="7.2" fill="#1cc04a"/><path d="M4 7.8 L6.5 10.2 L11 5.3" fill="none" stroke="#fff" stroke-width="1.9"/></svg>
<div class="t" style="left:246.90px;top:323.82px;font:normal 10.5px/10.5px 'Liberation Sans', sans-serif;color:#3a78b4;letter-spacing:-0.117px;">Create Uchi ITS Project RAID l...</div>
<svg style="position:absolute;left:400.00px;top:325.16px;" width="17.00" height="9.00" viewBox="0 0 17.00 9.00"><path d="M0.5 1 H10.5 M0.5 4.2 H10.5 M0.5 7.4 H10.5" stroke="#222" stroke-width="1.5"/><path d="M12.3 3.3 H15.7 L14 5.2 Z" fill="#222"/></svg>
<svg style="position:absolute;left:424.30px;top:321.26px;" width="16.00" height="16.00" viewBox="0 0 16.00 16.00"><circle cx="8" cy="8" r="8" fill="#f6a200"/><text x="8" y="11" text-anchor="middle" font-family="Liberation Sans" font-size="8.5" fill="#fff" letter-spacing="-0.4">DG</text></svg>
<div style="position:absolute;left:0.00px;top:340.35px;width:466.30px;height:22.69px;background:#f2f3f5;"></div>
<div style="position:absolute;left:11.70px;top:347.35px;width:8.50px;height:8.50px;background:#fff;border:1px solid #858585;box-sizing:border-box;border-radius:1.5px;"></div>
<div class="t" style="left:47.16px;top:346.51px;font:normal 10.5px/10.5px 'Liberation Sans', sans-serif;color:#555;">16</div>
<div class="t" style="left:102.70px;top:346.51px;font:normal 10.5px/10.5px 'Liberation Sans', sans-serif;color:#3a3a3a;">Task</div>
<svg style="position:absolute;left:169.50px;top:344.45px;" width="15.00" height="15.00" viewBox="0 0 15.00 15.00"><circle cx="7.5" cy="7.5" r="7.2" fill="#1cc04a"/><path d="M4 7.8 L6.5 10.2 L11 5.3" fill="none" stroke="#fff" stroke-width="1.9"/></svg>
<div class="t" style="left:246.90px;top:346.51px;font:normal 10.5px/10.5px 'Liberation Sans', sans-serif;color:#3a78b4;">Change Management</div>
<svg style="position:absolute;left:400.00px;top:347.85px;" width="17.00" height="9.00" viewBox="0 0 17.00 9.00"><path d="M0.5 1 H10.5 M0.5 4.2 H10.5 M0.5 7.4 H10.5" stroke="#222" stroke-width="1.5"/><path d="M12.3 3.3 H15.7 L14 5.2 Z" fill="#222"/></svg>
<svg style="position:absolute;left:424.30px;top:343.95px;" width="16.00" height="16.00" viewBox="0 0 16.00 16.00"><circle cx="8" cy="8" r="8" fill="#2a3550"/><text x="8" y="11" text-anchor="middle" font-family="Liberation Sans" font-size="8.5" fill="#fff" letter-spacing="-0.4">PH</text></svg>
<div style="position:absolute;left:11.70px;top:370.04px;width:8.50px;height:8.50px;background:#fff;border:1px solid #858585;box-sizing:border-box;border-radius:1.5px;"></div>
<svg style="position:absolute;left:169.50px;top:367.14px;" width="15.00" height="15.00" viewBox="0 0 15.00 15.00"><circle cx="7.5" cy="7.5" r="7.2" fill="#1cc04a"/><path d="M4 7.8 L6.5 10.2 L11 5.3" fill="none" stroke="#fff" stroke-width="1.9"/></svg>
<svg style="position:absolute;left:424.30px;top:366.64px;" width="16.00" height="16.00" viewBox="0 0 16.00 16.00"><circle cx="8" cy="8" r="8" fill="#f6a200"/></svg>
</div>
<div style="position:absolute;left:11.50px;top:596.00px;width:466.30px;height:11.00px;background:#f1f1f1;"></div>
<div style="position:absolute;left:24.00px;top:597.00px;width:164.80px;height:9.50px;background:#c1c1c1;"></div>
<svg style="position:absolute;left:16.00px;top:598.00px;" width="6.00" height="7.00" viewBox="0 0 6.00 7.00"><path d="M5 0.5 V6.5 L1 3.5 Z" fill="#a3a3a3"/></svg>
<svg style="position:absolute;left:468.50px;top:598.00px;" width="6.00" height="7.00" viewBox="0 0 6.00 7.00"><path d="M1 0.5 V6.5 L5 3.5 Z" fill="#505050"/></svg>
<div style="position:absolute;left:477.80px;top:164.00px;width:4.70px;height:443.00px;background:#c9c9c9;border-left:1px solid #8e8e8e;border-right:1px solid #9e9e9e;box-sizing:border-box;"></div>
<div style="position:absolute;left:482.50px;top:164.00px;width:787.30px;height:30.20px;background:#454549;"></div>
<div style="position:absolute;left:482.50px;top:194.20px;width:787.30px;height:29.80px;background:#4b4b50;"></div>
<div class="t" style="left:599.17px;top:173.61px;font:bold 10.5px/10.5px 'Liberation Sans', sans-serif;color:#f0f0f0;letter-spacing:0.128px;">July 2020</div>
<div class="t" style="left:929.07px;top:173.61px;font:bold 10.5px/10.5px 'Liberation Sans', sans-serif;color:#f0f0f0;letter-spacing:-0.072px;">August 2020</div>
<div style="position:absolute;left:482.5px;top:194.2px;width:775.20px;height:29.8px;overflow:hidden;">
<div style="position:absolute;left:-79.65px;top:0.00px;width:111.40px;height:29.80px;background:#525257;"></div>
<div class="t" style="left:-71.53px;top:9.01px;font:bold 10.5px/10.5px 'Liberation Sans', sans-serif;color:#f0f0f0;">Jul 12 - Jul 18 2020</div>
<div style="position:absolute;left:32.75px;top:0.00px;width:111.40px;height:29.80px;background:#4b4b50;"></div>
<div class="t" style="left:40.87px;top:9.01px;font:bold 10.5px/10.5px 'Liberation Sans', sans-serif;color:#f0f0f0;">Jul 19 - Jul 25 2020</div>
<div style="position:absolute;left:145.15px;top:0.00px;width:111.40px;height:29.80px;background:#525257;"></div>
<div class="t" style="left:153.77px;top:9.01px;font:bold 10.5px/10.5px 'Liberation Sans', sans-serif;color:#f0f0f0;">Jul 26 - Aug 1 2020</div>
<div style="position:absolute;left:257.55px;top:0.00px;width:111.40px;height:29.80px;background:#4b4b50;"></div>
<div class="t" style="left:266.47px;top:9.01px;font:bold 10.5px/10.5px 'Liberation Sans', sans-serif;color:#f0f0f0;">Aug 2 - Aug 8 2020</div>
<div style="position:absolute;left:369.95px;top:0.00px;width:111.40px;height:29.80px;background:#525257;"></div>
<div class="t" style="left:375.95px;top:9.01px;font:bold 10.5px/10.5px 'Liberation Sans', sans-serif;color:#f0f0f0;">Aug 9 - Aug 15 2020</div>
<div style="position:absolute;left:482.35px;top:0.00px;width:111.40px;height:29.80px;background:#4b4b50;"></div>
<div class="t" style="left:485.43px;top:9.01px;font:bold 10.5px/10.5px 'Liberation Sans', sans-serif;color:#f0f0f0;">Aug 16 - Aug 22 2020</div>
<div style="position:absolute;left:594.75px;top:0.00px;width:111.40px;height:29.80px;background:#525257;"></div>
<div class="t" style="left:597.83px;top:9.01px;font:bold 10.5px/10.5px 'Liberation Sans', sans-serif;color:#f0f0f0;">Aug 23 - Aug 29 2020</div>
<div style="position:absolute;left:707.15px;top:0.00px;width:111.40px;height:29.80px;background:#4b4b50;"></div>
<div class="t" style="left:713.53px;top:9.01px;font:bold 10.5px/10.5px 'Liberation Sans', sans-serif;color:#f0f0f0;">Aug 30 - Sep 5 2020</div>
</div>
<div style="position:absolute;left:482.5px;top:224px;width:775.20px;height:372.00px;overflow:hidden;background:#fff;">
<div style="position:absolute;left:-95.66px;top:0.00px;width:32.11px;height:372.00px;background:#fdf6dd;"></div>
<div style="position:absolute;left:16.74px;top:0.00px;width:32.11px;height:372.00px;background:#fdf6dd;"></div>
<div style="position:absolute;left:129.14px;top:0.00px;width:32.11px;height:372.00px;background:#fdf6dd;"></div>
<div style="position:absolute;left:241.54px;top:0.00px;width:32.11px;height:372.00px;background:#fdf6dd;"></div>
<div style="position:absolute;left:353.94px;top:0.00px;width:32.11px;height:372.00px;background:#fdf6dd;"></div>
<div style="position:absolute;left:466.34px;top:0.00px;width:32.11px;height:372.00px;background:#fdf6dd;"></div>
<div style="position:absolute;left:578.74px;top:0.00px;width:32.11px;height:372.00px;background:#fdf6dd;"></div>
<div style="position:absolute;left:691.14px;top:0.00px;width:32.11px;height:372.00px;background:#fdf6dd;"></div>
<div style="position:absolute;left:-80.10px;top:0.00px;width:1.00px;height:372.00px;background:repeating-linear-gradient(#777 0 2px,transparent 2px 3.5px);"></div>
<div style="position:absolute;left:32.30px;top:0.00px;width:1.00px;height:372.00px;background:repeating-linear-gradient(#777 0 2px,transparent 2px 3.5px);"></div>
<div style="position:absolute;left:144.70px;top:0.00px;width:1.00px;height:372.00px;background:repeating-linear-gradient(#777 0 2px,transparent 2px 3.5px);"></div>
<div style="position:absolute;left:257.10px;top:0.00px;width:1.00px;height:372.00px;background:repeating-linear-gradient(#777 0 2px,transparent 2px 3.5px);"></div>
<div style="position:absolute;left:369.50px;top:0.00px;width:1.00px;height:372.00px;background:repeating-linear-gradient(#777 0 2px,transparent 2px 3.5px);"></div>
<div style="position:absolute;left:481.90px;top:0.00px;width:1.00px;height:372.00px;background:repeating-linear-gradient(#777 0 2px,transparent 2px 3.5px);"></div>
<div style="position:absolute;left:594.30px;top:0.00px;width:1.00px;height:372.00px;background:repeating-linear-gradient(#777 0 2px,transparent 2px 3.5px);"></div>
<div style="position:absolute;left:706.70px;top:0.00px;width:1.00px;height:372.00px;background:repeating-linear-gradient(#777 0 2px,transparent 2px 3.5px);"></div>
<svg style="position:absolute;left:0.00px;top:0.00px;" width="775.20" height="372.00" viewBox="0 0 775.20 372.00"><path d="M96.30 57.52 L113.80 57.52 Q118.80 57.52 118.80 62.52 L118.80 86.74 Q118.80 91.74 113.80 91.74 L68.00 91.74 Q63.00 91.74 63.00 96.74 L63.00 98.44 Q63.00 103.44 68.00 103.44 L95.00 103.44" fill="none" stroke="#a09ef6" stroke-width="3" stroke-linejoin="round"/><path d="M95.00 103.44 L87.80 98.64 L87.80 108.24 Z" fill="#a09ef6"/><path d="M128.10 103.44 L146.10 103.44 Q151.10 103.44 151.10 108.44 L151.10 109.90 Q151.10 114.90 146.10 114.90 L99.80 114.90 Q94.80 114.90 94.80 119.90 L94.80 121.40 Q94.80 126.40 99.80 126.40 L127.30 126.40" fill="none" stroke="#a09ef6" stroke-width="3" stroke-linejoin="round"/><path d="M127.30 126.40 L120.10 121.60 L120.10 131.20 Z" fill="#a09ef6"/><path d="M144.50 126.40 L292.10 126.40 Q297.10 126.40 297.10 131.40 L297.10 144.36 Q297.10 149.36 302.10 149.36 L448.50 149.36" fill="none" stroke="#a09ef6" stroke-width="3" stroke-linejoin="round"/><path d="M448.50 149.36 L441.30 144.56 L441.30 154.16 Z" fill="#a09ef6"/><path d="M529.50 149.36 L546.80 149.36 Q551.80 149.36 551.80 154.36 L551.80 155.72 Q551.80 160.72 546.80 160.72 L501.30 160.72 Q496.30 160.72 496.30 165.72 L496.30 167.32 Q496.30 172.32 501.30 172.32 L528.10 172.32" fill="none" stroke="#a09ef6" stroke-width="3" stroke-linejoin="round"/><path d="M528.10 172.32 L520.90 167.52 L520.90 177.12 Z" fill="#a09ef6"/><path d="M561.20 172.32 L579.50 172.32 Q584.50 172.32 584.50 177.32 L584.50 178.78 Q584.50 183.78 579.50 183.78 L516.70 183.78 Q511.70 183.78 511.70 188.78 L511.70 190.28 Q511.70 195.28 516.70 195.28 L544.10 195.28" fill="none" stroke="#a09ef6" stroke-width="3" stroke-linejoin="round"/><path d="M544.10 195.28 L536.90 190.48 L536.90 200.08 Z" fill="#a09ef6"/><path d="M577.30 195.28 L588.30 195.28 Q593.30 195.28 593.30 200.28 L593.30 213.24 Q593.30 218.24 598.30 218.24 L608.70 218.24" fill="none" stroke="#a09ef6" stroke-width="3" stroke-linejoin="round"/><path d="M608.70 218.24 L601.50 213.44 L601.50 223.04 Z" fill="#a09ef6"/><path d="M642.10 218.24 L658.80 218.24 Q663.80 218.24 663.80 223.24 L663.80 224.60 Q663.80 229.60 658.80 229.60 L597.20 229.60 Q592.20 229.60 592.20 234.60 L592.20 236.20 Q592.20 241.20 597.20 241.20 L624.70 241.20" fill="none" stroke="#a09ef6" stroke-width="3" stroke-linejoin="round"/><path d="M624.70 241.20 L617.50 236.40 L617.50 246.00 Z" fill="#a09ef6"/><path d="M658.00 241.20 L675.70 241.20 Q680.70 241.20 680.70 246.20 L680.70 247.56 Q680.70 252.56 675.70 252.56 L629.30 252.56 Q624.30 252.56 624.30 257.56 L624.30 259.16 Q624.30 264.16 629.30 264.16 L656.90 264.16" fill="none" stroke="#a09ef6" stroke-width="3" stroke-linejoin="round"/><path d="M656.90 264.16 L649.70 259.36 L649.70 268.96 Z" fill="#a09ef6"/><path d="M689.80 264.16 L707.20 264.16 Q712.20 264.16 712.20 269.16 L712.20 270.62 Q712.20 275.62 707.20 275.62 L651.50 275.62 Q646.50 275.62 646.50 280.62 L646.50 282.12 Q646.50 287.12 651.50 287.12 L672.80 287.12" fill="none" stroke="#a09ef6" stroke-width="3" stroke-linejoin="round"/><path d="M672.80 287.12 L665.60 282.32 L665.60 291.92 Z" fill="#a09ef6"/><path d="M687.50 287.12 L708.00 287.12 Q713.00 287.12 713.00 292.12 L713.00 316.44 Q713.00 321.44 708.00 321.44 L646.10 321.44 Q641.10 321.44 641.10 326.44 L641.10 328.04 Q641.10 333.04 646.10 333.04 L673.30 333.04" fill="none" stroke="#a09ef6" stroke-width="3" stroke-linejoin="round"/><path d="M673.30 333.04 L666.10 328.24 L666.10 337.84 Z" fill="#a09ef6"/><path d="M737.90 333.04 L755.40 333.04 Q760.40 333.04 760.40 338.04 L760.40 339.40 Q760.40 344.40 755.40 344.40 L709.40 344.40 Q704.40 344.40 704.40 349.40 L704.40 351.00 Q704.40 356.00 709.40 356.00 L737.10 356.00" fill="none" stroke="#a09ef6" stroke-width="3" stroke-linejoin="round"/><path d="M737.10 356.00 L729.90 351.20 L729.90 360.80 Z" fill="#a09ef6"/><path d="M770.00 356.00 L787.50 356.00 Q792.50 356.00 792.50 361.00 L792.50 362.36 Q792.50 367.36 787.50 367.36 L720.50 367.36 Q715.50 367.36 715.50 372.36 L715.50 386.00" fill="none" stroke="#a09ef6" stroke-width="3" stroke-linejoin="round"/></svg>
<div style="position:absolute;left:31.75px;top:4.60px;width:785.75px;height:14.80px;background:linear-gradient(#000 0 2.4px,transparent 2.4px 9.2px,#008a00 9.2px),repeating-linear-gradient(135deg,#8f8f8f 0 3.8px,#bebebe 5.3px 9.1px,#8f8f8f 10.6px);border:1px solid #1e1e1e;box-sizing:border-box;border-radius:2px 2px 3px 3px;"></div>
<div style="position:absolute;left:31.75px;top:27.56px;width:64.23px;height:14.80px;background:linear-gradient(#000 0 2.4px,transparent 2.4px 9.2px,#008a00 9.2px),repeating-linear-gradient(135deg,#8f8f8f 0 3.8px,#bebebe 5.3px 9.1px,#8f8f8f 10.6px);border:1px solid #1e1e1e;box-sizing:border-box;border-radius:2px 2px 3px 3px;"></div>
<div style="position:absolute;left:31.75px;top:50.52px;width:64.23px;height:14.40px;background:linear-gradient(transparent 9.7px,#008a00 9.7px),repeating-linear-gradient(135deg,#8f8f8f 0 3.8px,#bebebe 5.3px 9.1px,#8f8f8f 10.6px);border:1px solid #2a2a2a;box-sizing:border-box;border-radius:3px;"></div>
<div style="position:absolute;left:95.98px;top:73.48px;width:594.11px;height:14.80px;background:linear-gradient(#000 0 2.4px,transparent 2.4px 9.2px,#f2c200 9.2px),repeating-linear-gradient(135deg,#8f8f8f 0 3.8px,#bebebe 5.3px 9.1px,#8f8f8f 10.6px);border:1px solid #1e1e1e;box-sizing:border-box;border-radius:2px 2px 3px 3px;"></div>
<div style="position:absolute;left:95.98px;top:96.44px;width:32.11px;height:14.40px;background:linear-gradient(transparent 9.7px,#f2c200 9.7px),repeating-linear-gradient(135deg,#8f8f8f 0 3.8px,#bebebe 5.3px 9.1px,#8f8f8f 10.6px);border:1px solid #2a2a2a;box-sizing:border-box;border-radius:3px;"></div>
<div style="position:absolute;left:128.09px;top:119.40px;width:16.06px;height:14.40px;background:linear-gradient(transparent 9.7px,#f2c200 9.7px),repeating-linear-gradient(135deg,#8f8f8f 0 3.8px,#bebebe 5.3px 9.1px,#8f8f8f 10.6px);border:1px solid #2a2a2a;box-sizing:border-box;border-radius:3px;"></div>
<div style="position:absolute;left:449.23px;top:142.36px;width:80.28px;height:14.40px;background:linear-gradient(transparent 9.7px,#ee0000 9.7px),repeating-linear-gradient(135deg,#8f8f8f 0 3.8px,#bebebe 5.3px 9.1px,#8f8f8f 10.6px);border:1px solid #2a2a2a;box-sizing:border-box;border-radius:3px;box-shadow:0 0 4px 2px rgba(130,120,255,0.75);"></div>
<div style="position:absolute;left:529.52px;top:165.32px;width:32.11px;height:14.40px;background:linear-gradient(transparent 9.7px,#f2c200 9.7px),repeating-linear-gradient(135deg,#8f8f8f 0 3.8px,#bebebe 5.3px 9.1px,#8f8f8f 10.6px);border:1px solid #2a2a2a;box-sizing:border-box;border-radius:3px;"></div>
<div style="position:absolute;left:545.57px;top:188.28px;width:32.11px;height:14.40px;background:linear-gradient(transparent 9.7px,#008a00 9.7px),repeating-linear-gradient(135deg,#8f8f8f 0 3.8px,#bebebe 5.3px 9.1px,#8f8f8f 10.6px);border:1px solid #2a2a2a;box-sizing:border-box;border-radius:3px;"></div>
<div style="position:absolute;left:609.80px;top:211.24px;width:32.11px;height:14.40px;background:linear-gradient(transparent 9.7px,#f2c200 9.7px),repeating-linear-gradient(135deg,#8f8f8f 0 3.8px,#bebebe 5.3px 9.1px,#8f8f8f 10.6px);border:1px solid #2a2a2a;box-sizing:border-box;border-radius:3px;"></div>
<div style="position:absolute;left:625.86px;top:234.20px;width:32.11px;height:14.40px;background:linear-gradient(transparent 9.7px,#008a00 9.7px),repeating-linear-gradient(135deg,#8f8f8f 0 3.8px,#bebebe 5.3px 9.1px,#8f8f8f 10.6px);border:1px solid #2a2a2a;box-sizing:border-box;border-radius:3px;"></div>
<div style="position:absolute;left:657.97px;top:257.16px;width:32.11px;height:14.40px;background:linear-gradient(transparent 9.7px,#ee0000 9.7px),repeating-linear-gradient(135deg,#8f8f8f 0 3.8px,#bebebe 5.3px 9.1px,#8f8f8f 10.6px);border:1px solid #2a2a2a;box-sizing:border-box;border-radius:3px;"></div>
<svg style="position:absolute;left:671.90px;top:278.62px;" width="17.00" height="17.00" viewBox="0 0 17.00 17.00"><path d="M8.5 1.3 L15.7 8.5 L8.5 15.7 L1.3 8.5 Z" fill="#a8a8a8" stroke="#333" stroke-width="1.1"/></svg>
<div style="position:absolute;left:674.03px;top:303.08px;width:143.47px;height:14.80px;background:linear-gradient(#000 0 2.4px,transparent 2.4px 9.2px,#008a00 9.2px),repeating-linear-gradient(135deg,#8f8f8f 0 3.8px,#bebebe 5.3px 9.1px,#8f8f8f 10.6px);border:1px solid #1e1e1e;box-sizing:border-box;border-radius:2px 2px 3px 3px;"></div>
<div style="position:absolute;left:674.03px;top:326.04px;width:64.23px;height:14.40px;background:linear-gradient(transparent 9.7px,#008a00 9.7px),repeating-linear-gradient(135deg,#8f8f8f 0 3.8px,#bebebe 5.3px 9.1px,#8f8f8f 10.6px);border:1px solid #2a2a2a;box-sizing:border-box;border-radius:3px;"></div>
<div style="position:absolute;left:738.26px;top:349.00px;width:32.11px;height:14.40px;background:linear-gradient(transparent 9.7px,#008a00 9.7px),repeating-linear-gradient(135deg,#8f8f8f 0 3.8px,#bebebe 5.3px 9.1px,#8f8f8f 10.6px);border:1px solid #2a2a2a;box-sizing:border-box;border-radius:3px;"></div>
<div class="t" style="left:104.50px;top:31.00px;font:bold 7.4px/7.4px 'Liberation Sans', sans-serif;color:#464646;letter-spacing:0.494px;">Initiating</div>
<div class="t" style="left:103.50px;top:53.96px;font:bold 7.4px/7.4px 'Liberation Sans', sans-serif;color:#464646;letter-spacing:0.406px;">vMotion - Group 4</div>
<div class="t" style="left:697.40px;top:76.92px;font:bold 7.4px/7.4px 'Liberation Sans', sans-serif;color:#464646;letter-spacing:0.290px;">Planning</div>
<div class="t" style="left:136.20px;top:99.88px;font:bold 7.4px/7.4px 'Liberation Sans', sans-serif;color:#464646;letter-spacing:0.337px;">Mechanical Vibration</div>
<div class="t" style="left:152.40px;top:122.84px;font:bold 7.4px/7.4px 'Liberation Sans', sans-serif;color:#464646;letter-spacing:0.329px;">Create Project Plan</div>
<div class="t" style="left:537.10px;top:145.80px;font:bold 7.4px/7.4px 'Liberation Sans', sans-serif;color:#464646;letter-spacing:0.274px;">950nm VCSEL</div>
<div class="t" style="left:569.40px;top:168.76px;font:bold 7.4px/7.4px 'Liberation Sans', sans-serif;color:#464646;letter-spacing:0.315px;">Transition to Support</div>
<div class="t" style="left:585.70px;top:191.72px;font:bold 7.4px/7.4px 'Liberation Sans', sans-serif;color:#464646;letter-spacing:0.386px;">Training Development</div>
<div class="t" style="left:649.70px;top:214.68px;font:bold 7.4px/7.4px 'Liberation Sans', sans-serif;color:#464646;letter-spacing:0.309px;">Pre-production in OSK</div>
<div class="t" style="left:665.50px;top:237.64px;font:bold 7.4px/7.4px 'Liberation Sans', sans-serif;color:#464646;letter-spacing:0.450px;">Configure cycle times &amp; Pay period</div>
<div class="t" style="left:697.50px;top:260.60px;font:bold 7.4px/7.4px 'Liberation Sans', sans-serif;color:#464646;letter-spacing:0.450px;">Installation and validatioin</div>
<div class="t" style="left:697.50px;top:283.56px;font:bold 7.4px/7.4px 'Liberation Sans', sans-serif;color:#464646;letter-spacing:0.312px;">Planning Complete</div>
<div class="t" style="left:745.20px;top:329.48px;font:bold 7.4px/7.4px 'Liberation Sans', sans-serif;color:#464646;letter-spacing:0.450px;">Create Uchi ITS Project RAID log</div>
<div style="position:absolute;left:251.90px;top:26.20px;width:342.60px;height:91.20px;background:rgba(229,229,229,0.93);border:1px solid #8f8f8f;box-sizing:border-box;border-radius:4px;"></div>
<div class="t" style="left:260.70px;top:35.57px;font:bold 10.2px/10.2px 'Liberation Sans', sans-serif;color:#3a3a3a;letter-spacing:-0.414px;">950nm VCSEL</div>
<div class="t" style="left:532.78px;top:35.57px;font:bold 10.2px/10.2px 'Liberation Sans', sans-serif;color:#3a3a3a;letter-spacing:-0.014px;">Deliverable</div>
<div class="t" style="left:538.78px;top:51.37px;font:bold 10.2px/10.2px 'Liberation Sans', sans-serif;color:#3a3a3a;letter-spacing:-0.487px;">WBS</div>
<div class="t" style="left:562.98px;top:51.37px;font:normal 10.2px/10.2px 'Liberation Sans', sans-serif;color:#6a6a6a;letter-spacing:0.270px;">1.2.3</div>
<div class="t" style="left:260.70px;top:66.77px;font:bold 10.2px/10.2px 'Liberation Sans', sans-serif;color:#3a3a3a;letter-spacing:-0.144px;">Plan Start</div>
<div class="t" style="left:308.80px;top:66.77px;font:normal 10.2px/10.2px 'Liberation Sans', sans-serif;color:#6a6a6a;letter-spacing:0.582px;">08/14/2020</div>
<div class="t" style="left:407.18px;top:66.77px;font:bold 10.2px/10.2px 'Liberation Sans', sans-serif;color:#3a3a3a;letter-spacing:-0.078px;">%Complete (Approved Timesheet)</div>
<div class="t" style="left:572.48px;top:66.77px;font:normal 10.2px/10.2px 'Liberation Sans', sans-serif;color:#6a6a6a;letter-spacing:-0.107px;">0%</div>
<div class="t" style="left:260.70px;top:82.47px;font:bold 10.2px/10.2px 'Liberation Sans', sans-serif;color:#3a3a3a;letter-spacing:-0.322px;">Plan End</div>
<div class="t" style="left:309.60px;top:82.47px;font:normal 10.2px/10.2px 'Liberation Sans', sans-serif;color:#6a6a6a;letter-spacing:0.502px;">08/18/2020</div>
<div class="t" style="left:491.28px;top:82.47px;font:bold 10.2px/10.2px 'Liberation Sans', sans-serif;color:#3a3a3a;letter-spacing:-0.116px;">%Complete (Set)</div>
<div class="t" style="left:572.48px;top:82.47px;font:normal 10.2px/10.2px 'Liberation Sans', sans-serif;color:#6a6a6a;letter-spacing:-0.107px;">0%</div>
<div class="t" style="left:260.70px;top:98.57px;font:bold 10.2px/10.2px 'Liberation Sans', sans-serif;color:#3a3a3a;letter-spacing:0.133px;">Workflow</div>
<div class="t" style="left:309.60px;top:98.57px;font:normal 10.2px/10.2px 'Liberation Sans', sans-serif;color:#6a6a6a;letter-spacing:0.059px;">To Do</div>
<div class="t" style="left:513.18px;top:98.57px;font:bold 10.2px/10.2px 'Liberation Sans', sans-serif;color:#3a3a3a;letter-spacing:-0.071px;">Duration</div>
<div class="t" style="left:557.18px;top:98.57px;font:normal 10.2px/10.2px 'Liberation Sans', sans-serif;color:#6a6a6a;letter-spacing:-0.033px;">5 days</div>
</div>
<div style="position:absolute;left:1257.70px;top:224.00px;width:10.50px;height:372.00px;background:#f1f1f1;"></div>
<div style="position:absolute;left:1257.70px;top:237.20px;width:10.50px;height:223.10px;background:#c1c1c1;"></div>
<svg style="position:absolute;left:1259.50px;top:228.00px;" width="7.00" height="6.00" viewBox="0 0 7.00 6.00"><path d="M0.5 5 H6.5 L3.5 1 Z" fill="#a3a3a3"/></svg>
<svg style="position:absolute;left:1259.50px;top:584.50px;" width="7.00" height="6.00" viewBox="0 0 7.00 6.00"><path d="M0.5 1 H6.5 L3.5 5 Z" fill="#505050"/></svg>
<div style="position:absolute;left:482.50px;top:596.00px;width:775.20px;height:11.00px;background:#f1f1f1;"></div>
<div style="position:absolute;left:523.75px;top:597.00px;width:271.85px;height:9.50px;background:#c1c1c1;"></div>
<svg style="position:absolute;left:486.00px;top:598.00px;" width="6.00" height="7.00" viewBox="0 0 6.00 7.00"><path d="M5 0.5 V6.5 L1 3.5 Z" fill="#505050"/></svg>
<svg style="position:absolute;left:1247.50px;top:598.00px;" width="6.00" height="7.00" viewBox="0 0 6.00 7.00"><path d="M1 0.5 V6.5 L5 3.5 Z" fill="#505050"/></svg>
<div style="position:absolute;left:1257.70px;top:596.00px;width:10.50px;height:11.00px;background:#dcdcdc;"></div>
<div style="position:absolute;left:11.50px;top:607.20px;width:1258.00px;height:33.40px;background:#47464b;border-radius:0 0 3px 3px;"></div>
<div style="position:absolute;left:0.00px;top:643.40px;width:1280.00px;height:1.60px;background:#1c1c1c;"></div>
<div style="position:absolute;left:126.00px;top:614.00px;width:109.80px;height:19.40px;background:#525257;border-radius:2px;"></div>
<svg style="position:absolute;left:130.20px;top:617.00px;" width="14.00" height="14.00" viewBox="0 0 14.00 14.00"><rect x="0" y="0" width="14" height="14" rx="1.5" fill="#1ba3ec"/><path d="M3 7.2 L6 10 L11.2 4.2" fill="none" stroke="#fff" stroke-width="1.7"/></svg>
<div class="t" style="left:149.50px;top:619.96px;font:bold 9.2px/9.2px 'Liberation Sans', sans-serif;color:#f2f2f2;letter-spacing:-0.332px;">Show Dependencies</div>
<div style="position:absolute;left:244.30px;top:614.00px;width:77.20px;height:19.40px;background:#525257;border-radius:2px;"></div>
<svg style="position:absolute;left:248.00px;top:617.00px;" width="14.00" height="14.00" viewBox="0 0 14.00 14.00"><rect x="0" y="0" width="14" height="14" rx="1.5" fill="#1ba3ec"/><path d="M3 7.2 L6 10 L11.2 4.2" fill="none" stroke="#fff" stroke-width="1.7"/></svg>
<div class="t" style="left:267.30px;top:619.96px;font:bold 9.2px/9.2px 'Liberation Sans', sans-serif;color:#f2f2f2;letter-spacing:-0.199px;">Critical Path</div>
<div class="t" style="left:325.60px;top:619.96px;font:normal 9.2px/9.2px 'Liberation Sans', sans-serif;color:#f2f2f2;letter-spacing:-0.109px;">Expanded</div>
<div style="position:absolute;left:370.20px;top:614.00px;width:62.50px;height:19.40px;background:#525257;border-radius:2px;"></div>
<div class="t" style="left:375.80px;top:619.96px;font:normal 9.2px/9.2px 'Liberation Sans', sans-serif;color:#f2f2f2;letter-spacing:0.019px;">All Levels</div>
<svg style="position:absolute;left:422.50px;top:621.50px;" width="8.00" height="5.00" viewBox="0 0 8.00 5.00"><path d="M0.8 0.8 L4 3.8 L7.2 0.8" fill="none" stroke="#f2f2f2" stroke-width="1.3"/></svg>
<div class="t" style="left:436.80px;top:619.96px;font:normal 9.2px/9.2px 'Liberation Sans', sans-serif;color:#f2f2f2;letter-spacing:0.047px;">Scale</div>
<div style="position:absolute;left:463.60px;top:614.00px;width:60.50px;height:19.40px;background:#525257;border-radius:2px;"></div>
<div class="t" style="left:469.70px;top:619.96px;font:normal 9.2px/9.2px 'Liberation Sans', sans-serif;color:#f2f2f2;letter-spacing:-0.027px;">Week</div>
<svg style="position:absolute;left:513.30px;top:621.50px;" width="8.00" height="5.00" viewBox="0 0 8.00 5.00"><path d="M0.8 0.8 L4 3.8 L7.2 0.8" fill="none" stroke="#f2f2f2" stroke-width="1.3"/></svg>
<div style="position:absolute;left:532.30px;top:614.00px;width:40.60px;height:19.40px;background:#525257;border-radius:2px;"></div>
<svg style="position:absolute;left:535.00px;top:617.50px;" width="12.00" height="12.00" viewBox="0 0 12.00 12.00"><circle cx="4.8" cy="4.8" r="3.8" fill="none" stroke="#f2f2f2" stroke-width="1.3"/><path d="M7.6 7.6 L11 11" stroke="#f2f2f2" stroke-width="1.5"/></svg>
<div class="t" style="left:548.90px;top:619.96px;font:normal 9.2px/9.2px 'Liberation Sans', sans-serif;color:#f2f2f2;letter-spacing:0.133px;">Filter</div>
<div style="position:absolute;left:581.10px;top:614.00px;width:66.60px;height:19.40px;background:#525257;border-radius:2px;"></div>
<svg style="position:absolute;left:584.50px;top:618.00px;" width="11.00" height="11.00" viewBox="0 0 11.00 11.00"><path d="M8.5 2.2 A4.5 4.5 0 1 0 9.7 6.5" fill="none" stroke="#f2f2f2" stroke-width="1.3"/><path d="M6.3 0.5 L9.5 0.9 L8.8 4 Z" fill="#f2f2f2"/></svg>
<div class="t" style="left:597.30px;top:619.96px;font:normal 9.2px/9.2px 'Liberation Sans', sans-serif;color:#f2f2f2;letter-spacing:0.028px;">Reset Filter</div>
<div style="position:absolute;left:655.20px;top:614.00px;width:78.20px;height:19.40px;background:#525257;border-radius:2px;"></div>
<div style="position:absolute;left:659.30px;top:617.60px;width:12.80px;height:13.40px;background:#fff;border-radius:1px;"></div>
<div class="t" style="left:678.20px;top:619.96px;font:bold 9.2px/9.2px 'Liberation Sans', sans-serif;color:#f2f2f2;letter-spacing:-0.154px;">Persist Filter</div>
<div style="position:absolute;left:742.00px;top:614.00px;width:56.40px;height:19.40px;background:#525257;border-radius:2px;"></div>
<svg style="position:absolute;left:745.50px;top:618.00px;" width="12.00" height="12.00" viewBox="0 0 12.00 12.00"><rect x="0.7" y="0.7" width="10.6" height="10.6" fill="none" stroke="#f2f2f2" stroke-width="1.2"/><path d="M0.7 4 H11.3 M0.7 7.6 H11.3 M4.2 4 V11.3 M7.8 4 V11.3" stroke="#f2f2f2" stroke-width="1"/></svg>
<div class="t" style="left:758.80px;top:619.96px;font:normal 9.2px/9.2px 'Liberation Sans', sans-serif;color:#f2f2f2;letter-spacing:0.093px;">Columns</div>
<div style="position:absolute;left:806.10px;top:614.00px;width:42.20px;height:19.40px;background:#525257;border-radius:2px;"></div>
<svg style="position:absolute;left:809.50px;top:617.50px;" width="12.00" height="12.00" viewBox="0 0 12.00 12.00"><path d="M3.5 0.7 H0.7 V11.3 H11.3 V0.7 H8.5" fill="none" stroke="#f2f2f2" stroke-width="1.3"/><path d="M6 2 V8.5 M3.3 6 L6 8.7 L8.7 6" fill="none" stroke="#f2f2f2" stroke-width="1.4"/></svg>
<div class="t" style="left:823.40px;top:619.96px;font:normal 9.2px/9.2px 'Liberation Sans', sans-serif;color:#f2f2f2;letter-spacing:-0.050px;">Excel</div>
<div style="position:absolute;left:855.90px;top:614.00px;width:73.70px;height:19.40px;background:#525257;border-radius:2px;"></div>
<svg style="position:absolute;left:859.50px;top:618.00px;" width="12.00" height="12.00" viewBox="0 0 12.00 12.00"><path d="M1.5 5 A4.6 4.6 0 0 1 10 3.5 M10.5 7 A4.6 4.6 0 0 1 2 8.5" fill="none" stroke="#f2f2f2" stroke-width="1.3"/><path d="M8 3.8 L11 4.3 L11 1 Z M4 8.2 L1 7.7 L1 11 Z" fill="#f2f2f2"/></svg>
<div class="t" style="left:872.70px;top:619.96px;font:normal 9.2px/9.2px 'Liberation Sans', sans-serif;color:#f2f2f2;letter-spacing:-0.035px;">Refresh Data</div>
<div style="position:absolute;left:941.00px;top:613.00px;width:1.00px;height:21.00px;background:#5a5a5f;"></div>
<div style="position:absolute;left:951.00px;top:613.80px;width:20.60px;height:20.70px;background:#4c4c51;"></div>
<svg style="position:absolute;left:955.00px;top:619.00px;" width="12.00" height="10.00" viewBox="0 0 12.00 10.00"><path d="M2 1 V9 M10 1 V9 L4 5 Z" fill="#5e5e63" stroke="#5e5e63" stroke-width="1.2"/></svg>
<div style="position:absolute;left:983.80px;top:613.80px;width:20.00px;height:20.70px;background:#4c4c51;"></div>
<svg style="position:absolute;left:988.00px;top:619.00px;" width="12.00" height="10.00" viewBox="0 0 12.00 10.00"><path d="M9 1 V9 L3 5 Z" fill="#5e5e63"/></svg>
<div class="t" style="left:1009.80px;top:619.03px;font:normal 10.3px/10.3px 'Liberation Sans', sans-serif;color:#f2f2f2;letter-spacing:0.292px;">Page</div>
<div style="position:absolute;left:1039.30px;top:616.20px;width:20.30px;height:15.90px;background:#fff;border-radius:2px;"></div>
<div class="t" style="left:1043.50px;top:619.28px;font:normal 10.3px/10.3px 'Liberation Sans', sans-serif;color:#555;">1</div>
<div class="t" style="left:1064.70px;top:619.03px;font:normal 10.3px/10.3px 'Liberation Sans', sans-serif;color:#f2f2f2;letter-spacing:0.636px;">of 3</div>
<div style="position:absolute;left:1091.00px;top:613.80px;width:22.40px;height:20.70px;background:#58585d;border-radius:1px;"></div>
<svg style="position:absolute;left:1097.00px;top:619.00px;" width="12.00" height="10.00" viewBox="0 0 12.00 10.00"><path d="M3 1 V9 L9 5 Z" fill="#8a8a8e"/></svg>
<div style="position:absolute;left:1122.20px;top:613.80px;width:22.10px;height:20.70px;background:#58585d;border-radius:1px;"></div>
<svg style="position:absolute;left:1127.00px;top:619.00px;" width="12.00" height="10.00" viewBox="0 0 12.00 10.00"><path d="M2 1 V9 L8 5 Z" fill="#8a8a8e"/><path d="M9.5 1 V9" stroke="#8a8a8e" stroke-width="1.6"/></svg>
<div class="t" style="left:1152.00px;top:619.03px;font:normal 10.3px/10.3px 'Liberation Sans', sans-serif;color:#f2f2f2;letter-spacing:0.061px;">1 - 25 of 51</div>
<div style="position:absolute;left:1213.00px;top:615.00px;width:45.00px;height:17.50px;background:#4f4f54;border-radius:2px;"></div>
<div class="t" style="left:1216.50px;top:619.03px;font:normal 10.3px/10.3px 'Liberation Sans', sans-serif;color:#f2f2f2;letter-spacing:0.531px;">25</div>
<svg style="position:absolute;left:1247.00px;top:621.50px;" width="8.00" height="5.00" viewBox="0 0 8.00 5.00"><path d="M0.8 0.8 L4 3.8 L7.2 0.8" fill="none" stroke="#f2f2f2" stroke-width="1.3"/></svg>
</body></html>
